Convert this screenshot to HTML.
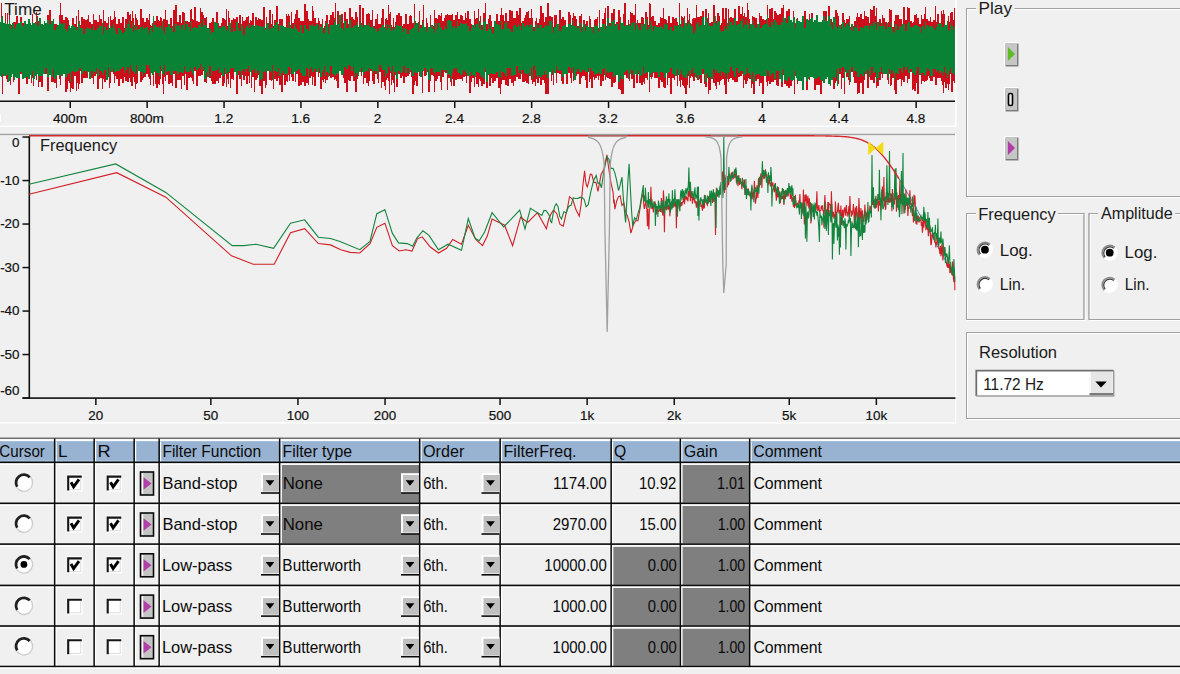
<!DOCTYPE html>
<html><head><meta charset="utf-8"><style>
html,body{margin:0;padding:0;width:1180px;height:674px;overflow:hidden;background:#f0f0f0;}
svg{display:block;font-family:"Liberation Sans", sans-serif;}
</style></head><body>
<svg width="1180" height="674" viewBox="0 0 1180 674">
<rect x="0" y="0" width="1180" height="674" fill="#f0f0f0"/>
<path d="M0 22.1H1V75.6H0ZM1 2.5H2V77.1H1ZM2 15.6H3V93.5H2ZM3 23.4H5V75.7H3ZM5 12.9H6V75.5H5ZM6 24.4H7V79.2H6ZM7 12.7H8V82.0H7ZM8 24.1H9V82.0H8ZM9 13.7H10V80.8H9ZM10 23.8H11V85.0H10ZM11 24.5H12V76.7H11ZM12 23.0H13V74.3H12ZM13 22.2H14V81.6H13ZM14 22.4H15V79.7H14ZM15 21.7H16V76.5H15ZM16 16.0H18V77.5H16ZM18 23.4H20V93.5H18ZM20 17.2H22V74.2H20ZM22 22.9H24V78.7H22ZM24 20.7H26V77.5H24ZM26 23.9H28V83.9H26ZM28 18.8H30V78.9H28ZM30 23.2H31V74.7H30ZM31 24.6H32V83.0H31ZM32 13.6H33V77.6H32ZM33 23.4H34V86.0H33ZM34 23.1H35V79.3H34ZM35 22.3H36V76.2H35ZM36 12.3H37V79.6H36ZM37 15.6H38V74.3H37ZM38 21.4H39V87.3H38ZM39 18.2H41V82.3H39ZM41 23.9H43V86.8H41ZM43 25.0H44V74.3H43ZM44 20.7H45V74.1H44ZM45 22.8H47V74.0H45ZM47 15.3H49V90.6H47ZM49 10.4H51V74.7H49ZM51 21.0H53V82.1H51ZM53 19.4H54V82.0H53ZM54 24.0H56V83.2H54ZM56 24.1H57V87.9H56ZM57 24.9H59V74.8H57ZM59 15.3H60V79.2H59ZM60 2.7H61V84.7H60ZM61 15.2H63V76.4H61ZM63 20.0H65V74.0H63ZM65 16.5H67V92.2H65ZM67 17.9H68V88.7H67ZM68 20.0H69V81.0H68ZM69 24.8H70V82.6H69ZM70 27.6H71V92.1H70ZM71 25.5H72V88.2H71ZM72 17.6H74V89.1H72ZM74 23.5H76V76.1H74ZM76 16.4H77V90.5H76ZM77 26.6H78V82.6H77ZM78 10.3H79V88.8H78ZM79 21.0H80V83.5H79ZM80 25.1H81V70.8H80ZM81 16.6H83V82.6H81ZM83 19.0H85V77.6H83ZM85 20.3H87V78.0H85ZM87 18.5H88V77.8H87ZM88 15.3H89V71.7H88ZM89 22.0H91V79.2H89ZM91 24.0H93V78.4H91ZM93 14.0H94V84.3H93ZM94 20.2H96V75.7H94ZM96 20.2H97V73.7H96ZM97 21.7H99V89.3H97ZM99 14.5H100V79.1H99ZM100 19.0H102V78.2H100ZM102 23.3H103V88.6H102ZM103 10.1H104V78.6H103ZM104 20.8H106V82.3H104ZM106 22.8H108V80.3H106ZM108 16.8H109V77.1H108ZM109 28.3H110V87.7H109ZM110 16.3H111V82.8H110ZM111 19.6H113V72.3H111ZM113 18.9H114V74.4H113ZM114 11.3H115V83.3H114ZM115 16.5H116V76.2H115ZM116 23.7H118V79.3H116ZM118 18.9H120V85.7H118ZM120 22.9H122V79.3H120ZM122 17.3H124V82.6H122ZM124 28.1H125V76.7H124ZM125 18.7H127V81.2H125ZM127 12.0H129V81.7H127ZM129 14.8H130V77.8H129ZM130 13.5H131V81.7H130ZM131 21.1H132V86.3H131ZM132 11.4H133V85.8H132ZM133 18.3H134V76.5H133ZM134 24.5H135V82.3H134ZM135 14.1H136V88.5H135ZM136 18.4H137V83.9H136ZM137 19.7H138V83.0H137ZM138 24.5H140V71.3H138ZM140 9.3H142V81.7H140ZM142 17.5H143V79.9H142ZM143 17.8H144V77.7H143ZM144 21.8H146V77.4H144ZM146 17.8H148V73.9H146ZM148 20.3H149V77.0H148ZM149 13.5H150V79.0H149ZM150 24.5H151V85.1H150ZM151 25.9H152V72.8H151ZM152 22.7H153V74.5H152ZM153 16.0H154V86.1H153ZM154 21.3H155V71.9H154ZM155 20.8H156V84.1H155ZM156 15.9H158V88.3H156ZM158 20.3H159V83.8H158ZM159 20.9H160V85.2H159ZM160 16.7H161V78.7H160ZM161 17.6H162V71.3H161ZM162 21.2H163V84.1H162ZM163 19.3H164V93.5H163ZM164 18.8H165V76.9H164ZM165 10.4H166V80.7H165ZM166 19.9H168V75.3H166ZM168 24.2H170V83.8H168ZM170 18.4H172V83.3H170ZM172 26.1H173V85.9H172ZM173 9.5H175V74.3H173ZM175 5.0H177V87.9H175ZM177 21.5H179V80.1H177ZM179 14.6H181V79.9H179ZM181 23.0H182V88.8H181ZM182 11.9H184V76.3H182ZM184 12.8H185V84.9H184ZM185 20.6H186V73.6H185ZM186 20.6H188V90.0H186ZM188 22.0H190V77.9H188ZM190 10.3H191V76.7H190ZM191 8.5H192V78.2H191ZM192 19.2H193V81.1H192ZM193 20.3H194V84.1H193ZM194 7.3H196V71.1H194ZM196 20.5H198V85.9H196ZM198 21.9H200V76.1H198ZM200 7.8H201V76.2H200ZM201 11.9H203V74.8H201ZM203 15.3H204V70.8H203ZM204 17.7H206V82.2H204ZM206 17.2H207V82.7H206ZM207 28.2H209V76.7H207ZM209 22.5H211V77.8H209ZM211 21.8H212V80.5H211ZM212 17.5H214V83.9H212ZM214 21.9H216V84.1H214ZM216 11.5H218V81.1H216ZM218 22.8H219V83.0H218ZM219 25.9H221V78.3H219ZM221 23.2H222V75.3H221ZM222 18.2H224V86.0H222ZM224 18.5H225V82.5H224ZM225 19.9H226V74.1H225ZM226 9.2H227V87.4H226ZM227 25.5H228V78.9H227ZM228 11.3H229V83.8H228ZM229 18.1H230V73.2H229ZM230 22.6H231V88.2H230ZM231 19.5H233V79.4H231ZM233 17.5H234V79.5H233ZM234 18.6H236V71.7H234ZM236 16.7H238V93.5H236ZM238 23.0H239V74.6H238ZM239 15.2H241V79.4H239ZM241 24.1H242V86.0H241ZM242 17.3H243V74.6H242ZM243 21.0H245V79.6H243ZM245 20.3H246V75.5H245ZM246 17.1H248V83.7H246ZM248 16.2H249V75.8H248ZM249 23.4H250V83.4H249ZM250 20.0H251V71.5H250ZM251 21.2H252V88.3H251ZM252 13.1H254V77.1H252ZM254 25.5H255V92.0H254ZM255 17.4H257V79.9H255ZM257 19.9H258V77.7H257ZM258 18.1H259V75.3H258ZM259 18.5H261V85.6H259ZM261 20.3H263V93.5H261ZM263 7.3H265V80.8H263ZM265 28.0H266V88.0H265ZM266 16.7H267V84.6H266ZM267 23.2H269V71.1H267ZM269 10.3H271V80.1H269ZM271 24.4H272V80.8H271ZM272 14.2H273V79.5H272ZM273 26.2H274V88.9H273ZM274 20.3H276V79.3H274ZM276 6.0H278V81.1H276ZM278 23.6H279V77.9H278ZM279 18.6H281V84.5H279ZM281 18.7H283V92.0H281ZM283 25.9H284V74.5H283ZM284 27.2H286V84.9H284ZM286 14.0H287V81.3H286ZM287 15.5H288V82.3H287ZM288 14.4H289V75.1H288ZM289 16.1H290V80.6H289ZM290 24.9H291V74.0H290ZM291 12.4H292V77.1H291ZM292 23.3H294V80.7H292ZM294 18.9H295V72.0H294ZM295 14.1H296V81.8H295ZM296 9.6H298V73.7H296ZM298 17.6H300V85.7H298ZM300 20.6H302V85.1H300ZM302 21.3H304V82.4H302ZM304 3.8H306V86.0H304ZM306 10.6H308V83.0H306ZM308 19.1H309V85.1H308ZM309 21.4H311V77.5H309ZM311 20.5H312V76.4H311ZM312 6.2H313V85.4H312ZM313 10.6H314V76.6H313ZM314 18.4H316V86.2H314ZM316 23.3H318V72.2H316ZM318 18.3H319V77.3H318ZM319 21.0H320V73.3H319ZM320 23.6H322V88.6H320ZM322 18.7H323V79.9H322ZM323 27.5H324V81.7H323ZM324 25.9H325V78.9H324ZM325 20.8H326V83.3H325ZM326 15.0H328V80.0H326ZM328 23.6H329V76.5H328ZM329 20.1H330V75.7H329ZM330 15.0H332V77.5H330ZM332 12.2H334V77.4H332ZM334 18.0H335V79.5H334ZM335 2.5H336V78.8H335ZM336 25.1H337V80.5H336ZM337 11.1H339V87.8H337ZM339 15.3H341V71.4H339ZM341 14.2H343V74.8H341ZM343 23.1H344V78.3H343ZM344 12.0H346V83.0H344ZM346 19.1H348V92.0H346ZM348 24.0H349V79.5H348ZM349 8.2H351V81.0H349ZM351 16.9H353V76.4H351ZM353 19.3H354V80.8H353ZM354 20.1H355V80.6H354ZM355 12.1H357V92.1H355ZM357 17.4H358V79.4H357ZM358 27.0H359V75.5H358ZM359 5.1H361V72.4H359ZM361 22.7H362V76.1H361ZM362 8.4H363V71.9H362ZM363 7.7H364V84.4H363ZM364 25.1H366V77.6H364ZM366 14.4H368V82.8H366ZM368 12.5H369V86.0H368ZM369 14.4H370V80.6H369ZM370 20.4H372V71.4H370ZM372 9.7H373V80.8H372ZM373 26.2H375V83.9H373ZM375 19.3H377V74.3H375ZM377 14.4H378V79.0H377ZM378 23.5H379V83.4H378ZM379 23.8H381V71.8H379ZM381 17.6H382V87.7H381ZM382 9.3H384V81.6H382ZM384 27.4H385V85.7H384ZM385 19.4H386V89.5H385ZM386 17.5H387V79.5H386ZM387 20.2H388V78.0H387ZM388 4.6H389V80.6H388ZM389 13.7H390V93.5H389ZM390 11.9H391V72.7H390ZM391 25.4H392V85.0H391ZM392 26.8H393V80.3H392ZM393 18.1H394V83.3H393ZM394 26.5H395V92.2H394ZM395 22.1H396V75.1H395ZM396 14.7H398V86.6H396ZM398 12.5H400V73.5H398ZM400 16.4H402V78.3H400ZM402 25.9H403V76.4H402ZM403 24.2H405V82.8H403ZM405 14.2H407V76.8H405ZM407 23.8H409V76.0H407ZM409 15.9H410V74.1H409ZM410 14.9H411V71.9H410ZM411 15.7H412V77.0H411ZM412 23.1H414V93.5H412ZM414 3.7H415V85.4H414ZM415 21.4H416V81.3H415ZM416 23.1H418V85.5H416ZM418 21.7H419V72.4H418ZM419 10.6H420V75.5H419ZM420 24.5H422V77.4H420ZM422 19.8H423V92.5H422ZM423 4.7H424V71.4H423ZM424 27.2H426V76.4H424ZM426 18.0H427V74.7H426ZM427 22.8H428V71.9H427ZM428 27.3H430V92.4H428ZM430 14.6H431V81.2H430ZM431 25.0H433V74.5H431ZM433 26.1H434V76.0H433ZM434 9.5H435V91.7H434ZM435 18.3H437V80.5H435ZM437 18.6H438V78.9H437ZM438 14.7H440V76.2H438ZM440 15.6H441V81.5H440ZM441 13.3H442V90.1H441ZM442 20.5H444V77.0H442ZM444 18.3H445V71.5H444ZM445 14.9H447V73.1H445ZM447 14.4H448V90.1H447ZM448 15.1H450V77.9H448ZM450 14.8H451V82.0H450ZM451 14.7H452V85.7H451ZM452 13.6H453V79.0H452ZM453 19.8H455V85.6H453ZM455 15.3H457V80.2H455ZM457 11.8H458V79.1H457ZM458 19.4H460V79.3H458ZM460 14.5H462V78.8H460ZM462 15.7H463V80.9H462ZM463 19.5H465V77.2H463ZM465 13.2H466V76.2H465ZM466 17.7H467V83.2H466ZM467 11.2H469V75.5H467ZM469 19.0H471V93.1H469ZM471 24.3H472V81.6H471ZM472 25.4H474V77.9H472ZM474 11.1H475V87.1H474ZM475 18.7H476V76.7H475ZM476 17.6H478V83.9H476ZM478 8.7H479V86.9H478ZM479 20.7H480V78.5H479ZM480 16.2H481V81.3H480ZM481 25.0H483V86.0H481ZM483 12.6H485V84.3H483ZM485 2.5H486V72.2H485ZM486 23.6H488V87.5H486ZM488 18.7H489V74.8H488ZM489 14.5H491V85.5H489ZM491 20.9H492V77.9H491ZM492 26.5H494V83.3H492ZM494 21.2H496V80.8H494ZM496 14.2H498V77.5H496ZM498 20.6H500V87.5H498ZM500 14.9H501V93.5H500ZM501 8.1H502V84.3H501ZM502 15.3H504V80.3H502ZM504 20.9H505V80.2H504ZM505 12.8H507V84.5H505ZM507 20.8H509V85.8H507ZM509 9.7H511V79.3H509ZM511 11.4H513V82.7H511ZM513 17.6H514V85.5H513ZM514 17.5H516V81.0H514ZM516 11.0H518V76.6H516ZM518 14.5H519V78.9H518ZM519 7.9H521V78.9H519ZM521 23.1H522V73.8H521ZM522 20.8H524V82.2H522ZM524 17.6H525V81.7H524ZM525 14.9H526V81.2H525ZM526 12.4H528V83.1H526ZM528 10.5H529V83.8H528ZM529 17.6H531V76.2H529ZM531 9.1H532V80.0H531ZM532 18.4H533V83.5H532ZM533 26.7H535V81.6H533ZM535 21.0H536V86.1H535ZM536 18.0H537V79.1H536ZM537 23.0H539V82.8H537ZM539 19.2H540V77.8H539ZM540 6.0H542V85.4H540ZM542 13.1H544V80.0H542ZM544 22.1H545V82.6H544ZM545 16.5H546V93.5H545ZM546 17.1H547V93.5H546ZM547 3.0H549V93.5H547ZM549 16.2H551V71.5H549ZM551 16.8H552V80.8H551ZM552 16.6H553V75.1H552ZM553 27.3H554V84.9H553ZM554 15.2H556V72.5H554ZM556 14.7H557V83.4H556ZM557 23.6H559V72.6H557ZM559 9.8H561V73.9H559ZM561 18.5H562V80.8H561ZM562 16.6H564V83.9H562ZM564 19.7H566V73.9H564ZM566 27.3H568V84.1H566ZM568 12.2H570V72.9H568ZM570 14.8H571V77.5H570ZM571 25.3H572V83.2H571ZM572 17.6H573V73.0H572ZM573 13.4H574V80.7H573ZM574 15.7H576V80.2H574ZM576 19.2H577V75.5H576ZM577 26.0H579V73.7H577ZM579 16.1H581V83.8H579ZM581 13.8H582V77.9H581ZM582 27.1H583V75.6H582ZM583 20.3H585V75.9H583ZM585 24.3H586V79.6H585ZM586 20.9H588V87.6H586ZM588 27.2H589V71.5H588ZM589 15.8H590V82.3H589ZM590 18.5H591V79.0H590ZM591 27.2H593V88.2H591ZM593 26.5H594V77.4H593ZM594 19.5H595V79.7H594ZM595 18.7H597V78.4H595ZM597 17.3H598V76.3H597ZM598 27.5H599V80.3H598ZM599 9.7H600V76.0H599ZM600 27.1H602V85.7H600ZM602 18.6H604V80.8H602ZM604 12.7H605V75.2H604ZM605 7.5H606V80.1H605ZM606 25.7H607V77.1H606ZM607 5.8H609V77.7H607ZM609 22.5H611V78.5H609ZM611 13.4H613V87.4H611ZM613 9.4H615V82.6H613ZM615 24.4H616V81.6H615ZM616 22.4H618V74.5H616ZM618 10.3H620V89.2H618ZM620 16.8H621V90.0H620ZM621 23.4H623V93.5H621ZM623 13.8H624V93.5H623ZM624 2.5H626V74.8H624ZM626 25.3H628V78.4H626ZM628 20.0H629V78.6H628ZM629 23.5H630V81.0H629ZM630 11.8H631V74.4H630ZM631 12.5H633V78.5H631ZM633 14.7H635V88.4H633ZM635 3.8H636V74.1H635ZM636 23.4H637V82.9H636ZM637 19.5H638V82.8H637ZM638 22.9H639V73.5H638ZM639 22.7H641V83.4H639ZM641 16.7H643V85.4H641ZM643 17.6H644V81.8H643ZM644 24.2H645V83.5H644ZM645 12.2H647V78.4H645ZM647 17.1H648V80.1H647ZM648 24.5H649V71.8H648ZM649 2.8H650V91.9H649ZM650 4.0H651V77.0H650ZM651 17.4H652V79.2H651ZM652 15.9H653V76.8H652ZM653 16.2H654V73.0H653ZM654 20.5H656V78.0H654ZM656 25.3H658V77.9H656ZM658 23.2H660V87.6H658ZM660 17.1H661V79.5H660ZM661 17.9H663V82.2H661ZM663 8.4H664V87.3H663ZM664 19.1H666V88.3H664ZM666 20.4H667V73.3H666ZM667 23.0H668V85.4H667ZM668 16.3H670V77.6H668ZM670 23.4H672V93.5H670ZM672 17.0H674V78.2H672ZM674 19.4H675V79.6H674ZM675 17.5H677V75.5H675ZM677 22.4H678V86.3H677ZM678 25.1H679V75.4H678ZM679 2.5H680V81.3H679ZM680 24.1H681V86.5H680ZM681 16.1H682V80.4H681ZM682 16.7H683V84.7H682ZM683 17.9H684V85.6H683ZM684 15.9H685V87.9H684ZM685 23.0H687V93.5H685ZM687 7.6H688V84.5H687ZM688 19.7H689V76.3H688ZM689 13.7H690V87.7H689ZM690 22.6H691V78.0H690ZM691 24.0H692V76.1H691ZM692 18.7H693V76.9H692ZM693 17.5H695V80.9H693ZM695 18.0H696V76.8H695ZM696 5.1H697V77.9H696ZM697 17.1H699V79.9H697ZM699 16.8H700V78.9H699ZM700 15.5H702V83.3H700ZM702 11.2H704V73.6H702ZM704 25.1H705V84.2H704ZM705 9.4H707V86.9H705ZM707 17.5H708V77.5H707ZM708 13.4H709V93.5H708ZM709 22.7H711V89.8H709ZM711 21.7H713V78.7H711ZM713 5.2H715V83.0H713ZM715 16.0H716V85.8H715ZM716 20.8H717V89.1H716ZM717 12.5H719V81.8H717ZM719 16.4H720V84.7H719ZM720 24.6H721V80.6H720ZM721 22.6H722V80.1H721ZM722 7.5H724V79.2H722ZM724 19.0H725V84.5H724ZM725 7.6H727V93.5H725ZM727 22.7H728V79.0H727ZM728 9.0H729V81.5H728ZM729 18.0H730V78.7H729ZM730 17.3H732V78.2H730ZM732 17.9H734V79.7H732ZM734 8.5H736V82.1H734ZM736 20.5H738V81.8H736ZM738 5.6H740V77.0H738ZM740 14.4H742V76.2H740ZM742 6.8H743V74.2H742ZM743 15.6H744V88.1H743ZM744 13.1H745V79.9H744ZM745 17.3H747V83.6H745ZM747 2.5H748V81.1H747ZM748 10.2H749V77.8H748ZM749 18.5H750V78.6H749ZM750 23.9H751V79.2H750ZM751 24.4H752V87.7H751ZM752 15.7H753V83.5H752ZM753 16.6H755V93.5H753ZM755 18.3H757V80.7H755ZM757 23.5H759V78.6H757ZM759 12.9H760V85.7H759ZM760 15.8H762V82.5H760ZM762 19.1H764V93.5H762ZM764 20.4H766V75.5H764ZM766 18.7H767V81.9H766ZM767 4.5H768V85.9H767ZM768 17.9H769V80.5H768ZM769 8.5H771V83.5H769ZM771 7.6H773V81.5H771ZM773 19.1H774V81.7H773ZM774 10.9H776V80.1H774ZM776 12.8H777V85.4H776ZM777 15.3H779V85.7H777ZM779 13.5H781V79.2H779ZM781 7.8H783V87.4H781ZM783 5.1H784V74.8H783ZM784 18.3H786V83.8H784ZM786 10.5H788V86.2H786ZM788 8.6H790V88.4H788ZM790 20.2H792V86.0H790ZM792 21.5H793V80.9H792ZM793 11.1H794V79.9H793ZM794 16.6H795V93.5H794ZM795 23.0H796V76.4H795ZM796 19.3H797V77.8H796ZM797 17.9H798V84.1H797ZM798 21.2H800V80.8H798ZM800 22.2H802V80.6H800ZM802 16.2H804V90.2H802ZM804 10.7H806V76.9H804ZM806 19.4H808V89.5H806ZM808 19.6H809V78.7H808ZM809 13.7H810V80.0H809ZM810 19.3H811V77.0H810ZM811 12.6H813V76.7H811ZM813 22.3H814V78.2H813ZM814 19.7H816V90.3H814ZM816 14.6H818V84.9H816ZM818 21.8H820V85.0H818ZM820 22.1H822V93.5H820ZM822 20.4H823V81.0H822ZM823 10.8H825V82.7H823ZM825 11.1H827V78.9H825ZM827 21.0H828V77.2H827ZM828 5.7H830V83.9H828ZM830 18.6H831V85.5H830ZM831 18.9H832V80.1H831ZM832 22.1H833V80.3H832ZM833 16.8H835V89.2H833ZM835 10.0H836V83.3H835ZM836 10.4H837V80.7H836ZM837 13.1H838V85.8H837ZM838 16.3H839V83.6H838ZM839 25.0H841V74.4H839ZM841 24.0H842V88.5H841ZM842 12.9H844V78.1H842ZM844 20.0H845V93.5H844ZM845 22.5H846V72.4H845ZM846 18.8H848V77.0H846ZM848 18.7H849V79.5H848ZM849 16.0H850V84.9H849ZM850 27.3H851V82.3H850ZM851 23.9H853V72.0H851ZM853 26.4H854V77.1H853ZM854 21.0H856V82.8H854ZM856 16.9H857V82.8H856ZM857 12.6H858V93.5H857ZM858 16.8H860V93.1H858ZM860 14.1H862V82.7H860ZM862 19.2H864V93.5H862ZM864 10.6H865V79.6H864ZM865 15.5H867V74.1H865ZM867 17.3H869V88.3H867ZM869 23.3H870V77.4H869ZM870 9.0H871V79.8H870ZM871 10.4H873V80.3H871ZM873 5.6H875V82.9H873ZM875 16.0H876V76.6H875ZM876 7.7H877V88.3H876ZM877 21.5H879V86.2H877ZM879 18.8H881V80.3H879ZM881 22.5H882V73.7H881ZM882 14.5H883V77.5H882ZM883 18.2H885V73.5H883ZM885 22.2H887V73.6H885ZM887 23.0H888V79.5H887ZM888 21.9H889V84.1H888ZM889 8.8H890V74.0H889ZM890 10.3H891V86.1H890ZM891 10.2H892V84.6H891ZM892 26.6H893V77.8H892ZM893 26.8H894V77.8H893ZM894 20.8H895V89.8H894ZM895 15.0H897V93.5H895ZM897 15.0H899V79.5H897ZM899 19.4H901V79.2H899ZM901 18.7H902V85.9H901ZM902 23.6H903V79.5H902ZM903 6.9H905V82.2H903ZM905 19.9H907V75.9H905ZM907 7.0H908V82.7H907ZM908 8.2H910V78.9H908ZM910 20.7H912V71.6H910ZM912 23.0H913V90.0H912ZM913 22.2H914V88.6H913ZM914 14.8H916V91.2H914ZM916 13.7H917V83.1H916ZM917 17.7H919V93.5H917ZM919 23.5H921V75.3H919ZM921 14.6H922V84.3H921ZM922 19.1H924V80.7H922ZM924 14.0H925V81.6H924ZM925 7.0H926V81.1H925ZM926 19.3H927V81.4H926ZM927 19.0H928V80.1H927ZM928 21.0H929V75.9H928ZM929 20.7H930V77.6H929ZM930 17.3H931V80.5H930ZM931 22.3H933V81.0H931ZM933 19.5H935V77.1H933ZM935 5.8H936V84.7H935ZM936 22.4H937V85.4H936ZM937 13.8H939V78.4H937ZM939 23.0H941V77.9H939ZM941 10.8H942V80.5H941ZM942 13.5H943V85.0H942ZM943 10.4H944V93.0H943ZM944 14.0H945V82.1H944ZM945 25.3H947V88.3H945ZM947 20.8H948V84.4H947ZM948 16.3H949V90.0H948ZM949 21.5H950V83.7H949ZM950 12.5H951V73.6H950ZM951 12.1H953V92.3H951ZM953 19.8H954V80.9H953ZM954 8.0H955V82.5H954Z" fill="#cd0f1b" shape-rendering="crispEdges"/>
<path d="M0 22.1H1V75.6H0ZM1 15.3H2V77.1H1ZM2 15.6H3V78.5H2ZM3 23.4H5V75.7H3ZM5 21.2H6V75.5H5ZM6 24.4H7V79.2H6ZM7 20.7H8V75.4H7ZM8 24.1H9V82.0H8ZM9 19.7H10V80.8H9ZM10 23.8H11V79.3H10ZM11 24.5H12V76.7H11ZM12 23.0H13V74.3H12ZM13 22.2H14V77.4H13ZM14 22.4H15V79.7H14ZM15 21.7H16V76.5H15ZM16 23.8H18V77.5H16ZM18 23.4H20V77.5H18ZM20 17.2H22V74.2H20ZM22 22.9H24V78.7H22ZM24 20.7H26V77.5H24ZM26 23.9H28V76.9H26ZM28 18.8H30V78.9H28ZM30 23.2H31V74.7H30ZM31 24.6H32V77.3H31ZM32 22.3H33V77.6H32ZM33 23.4H34V80.5H33ZM34 23.1H35V79.3H34ZM35 22.3H36V76.2H35ZM36 16.9H37V74.9H36ZM37 24.7H38V74.3H37ZM38 21.4H39V81.0H38ZM39 18.2H41V75.5H39ZM41 23.9H43V75.5H41ZM43 25.0H44V74.3H43ZM44 20.7H45V74.1H44ZM45 22.8H47V74.0H45ZM47 20.4H49V76.5H47ZM49 23.9H51V74.7H49ZM51 21.0H53V76.9H51ZM53 19.4H54V74.1H53ZM54 24.0H56V78.8H54ZM56 24.1H57V76.3H56ZM57 24.9H59V74.8H57ZM59 20.8H60V75.9H59ZM60 23.2H61V74.6H60ZM61 20.1H63V76.4H61ZM63 23.2H65V74.0H63ZM65 24.7H67V78.9H65ZM67 26.9H68V78.0H67ZM68 23.9H69V73.8H68ZM69 24.8H70V72.7H69ZM70 27.6H71V81.9H70ZM71 25.5H72V72.4H71ZM72 23.1H74V75.5H72ZM74 26.7H76V72.4H74ZM76 27.5H77V71.9H76ZM77 26.6H78V74.2H77ZM78 23.8H79V70.6H78ZM79 21.0H80V72.2H79ZM80 28.2H81V70.8H80ZM81 28.3H83V74.2H81ZM83 28.0H85V70.7H83ZM85 27.5H87V70.9H85ZM87 27.4H88V74.7H87ZM88 26.0H89V71.7H88ZM89 28.2H91V79.2H89ZM91 24.0H93V70.8H91ZM93 25.6H94V75.4H93ZM94 26.9H96V71.7H94ZM96 25.0H97V73.7H96ZM97 28.4H99V75.6H97ZM99 25.2H100V74.8H99ZM100 26.1H102V72.6H100ZM102 23.3H103V77.0H102ZM103 27.1H104V74.8H103ZM104 26.4H106V75.8H104ZM106 22.8H108V80.3H106ZM108 24.6H109V71.1H108ZM109 28.3H110V81.0H109ZM110 25.1H111V71.3H110ZM111 23.9H113V72.3H111ZM113 24.0H114V71.1H113ZM114 26.9H115V76.2H114ZM115 26.4H116V76.2H115ZM116 28.4H118V73.3H116ZM118 27.8H120V70.9H118ZM120 27.9H122V71.3H120ZM122 27.4H124V72.1H122ZM124 28.1H125V72.8H124ZM125 27.8H127V71.0H125ZM127 23.8H129V73.2H127ZM129 20.3H130V74.1H129ZM130 27.8H131V71.0H130ZM131 27.4H132V73.2H131ZM132 22.9H133V71.8H132ZM133 27.4H134V70.6H133ZM134 24.5H135V74.5H134ZM135 25.9H136V72.1H135ZM136 26.0H137V71.9H136ZM137 24.0H138V76.9H137ZM138 27.6H140V71.3H138ZM140 26.7H142V76.0H140ZM142 26.7H143V76.0H142ZM143 21.2H144V72.3H143ZM144 21.8H146V72.8H144ZM146 26.9H148V70.5H146ZM148 25.3H149V71.2H148ZM149 27.8H150V70.6H149ZM150 28.1H151V75.5H150ZM151 25.9H152V72.8H151ZM152 26.7H153V74.5H152ZM153 16.0H154V73.6H153ZM154 24.8H155V71.9H154ZM155 25.0H156V71.0H155ZM156 27.2H158V73.3H156ZM158 25.6H159V72.7H158ZM159 27.7H160V76.0H159ZM160 24.9H161V70.6H160ZM161 27.7H162V71.3H161ZM162 21.2H163V78.5H162ZM163 25.4H164V73.6H163ZM164 27.9H165V71.9H164ZM165 25.2H166V75.2H165ZM166 26.6H168V71.8H166ZM168 24.2H170V72.9H168ZM170 28.1H172V74.8H170ZM172 26.1H173V75.3H172ZM173 26.9H175V71.3H173ZM175 23.5H177V70.8H175ZM177 26.3H179V73.8H177ZM179 25.0H181V71.6H179ZM181 28.5H182V73.0H181ZM182 23.7H184V72.7H182ZM184 19.7H185V71.1H184ZM185 28.1H186V73.6H185ZM186 23.6H188V75.8H186ZM188 26.6H190V71.8H188ZM190 24.0H191V73.6H190ZM191 21.0H192V70.9H191ZM192 27.7H193V76.7H192ZM193 25.9H194V74.7H193ZM194 27.3H196V71.1H194ZM196 26.0H198V72.4H196ZM198 21.9H200V73.0H198ZM200 19.8H201V70.6H200ZM201 26.8H203V70.6H201ZM203 18.8H204V70.8H203ZM204 25.4H206V79.0H204ZM206 26.0H207V76.4H206ZM207 28.2H209V76.7H207ZM209 28.0H211V71.7H209ZM211 28.2H212V75.8H211ZM212 25.0H214V70.8H212ZM214 21.9H216V70.9H214ZM216 23.3H218V71.7H216ZM218 26.9H219V73.1H218ZM219 25.9H221V73.1H219ZM221 27.2H222V72.2H221ZM222 26.2H224V75.7H222ZM224 27.3H225V71.2H224ZM225 26.1H226V74.1H225ZM226 24.6H227V73.7H226ZM227 25.5H228V73.5H227ZM228 21.8H229V71.8H228ZM229 21.7H230V73.2H229ZM230 22.6H231V71.7H230ZM231 25.8H233V71.4H231ZM233 27.1H234V73.7H233ZM234 27.6H236V71.7H234ZM236 21.0H238V79.3H236ZM238 27.5H239V70.6H238ZM239 26.6H241V71.1H239ZM241 24.1H242V80.0H241ZM242 24.6H243V70.9H242ZM243 27.9H245V75.5H243ZM245 28.4H246V75.5H245ZM246 25.7H248V75.8H246ZM248 24.4H249V71.2H248ZM249 27.5H250V72.2H249ZM250 25.4H251V71.5H250ZM251 26.5H252V75.9H251ZM252 22.5H254V70.6H252ZM254 25.5H255V75.2H254ZM255 24.6H257V72.9H255ZM257 24.2H258V73.5H257ZM258 26.1H259V70.9H258ZM259 26.4H261V81.6H259ZM261 26.5H263V79.0H261ZM263 26.3H265V72.4H263ZM265 28.0H266V73.6H265ZM266 24.4H267V72.9H266ZM267 23.2H269V71.1H267ZM269 24.9H271V71.6H269ZM271 24.4H272V73.1H271ZM272 25.3H273V72.1H272ZM273 26.2H274V80.3H273ZM274 24.5H276V72.4H274ZM276 22.4H278V72.2H276ZM278 28.1H279V71.0H278ZM279 24.8H281V75.5H279ZM281 26.0H283V75.9H281ZM283 25.9H284V70.6H283ZM284 27.2H286V73.9H284ZM286 22.2H287V77.2H286ZM287 27.7H288V74.6H287ZM288 21.7H289V71.3H288ZM289 25.0H290V71.4H289ZM290 24.9H291V74.0H290ZM291 27.7H292V72.4H291ZM292 27.3H294V74.3H292ZM294 24.1H295V72.0H294ZM295 27.3H296V73.5H295ZM296 25.5H298V73.7H296ZM298 27.0H300V73.8H298ZM300 20.6H302V73.4H300ZM302 28.1H304V75.6H302ZM304 23.8H306V76.0H304ZM306 28.0H308V74.7H306ZM308 27.0H309V77.1H308ZM309 25.2H311V73.4H309ZM311 25.7H312V72.7H311ZM312 23.7H313V72.0H312ZM313 23.2H314V71.5H313ZM314 25.9H316V72.0H314ZM316 23.3H318V72.2H316ZM318 27.6H319V72.6H318ZM319 24.6H320V73.3H319ZM320 27.3H322V76.8H320ZM322 24.1H323V72.2H322ZM323 27.5H324V73.2H323ZM324 25.9H325V73.0H324ZM325 27.0H326V75.7H325ZM326 23.0H328V72.2H326ZM328 27.8H329V76.5H328ZM329 27.3H330V72.6H329ZM330 25.1H332V70.9H330ZM332 24.8H334V74.2H332ZM334 21.7H335V76.0H334ZM335 18.6H336V74.6H335ZM336 25.1H337V73.1H336ZM337 23.8H339V74.3H337ZM339 15.3H341V71.4H339ZM341 28.2H343V74.8H341ZM343 26.7H344V73.9H343ZM344 20.9H346V71.1H344ZM346 28.1H348V74.8H346ZM348 28.0H349V70.8H348ZM349 20.4H351V72.6H349ZM351 28.1H353V71.1H351ZM353 24.9H354V72.9H353ZM354 26.1H355V76.9H354ZM355 25.0H357V76.1H355ZM357 21.9H358V75.1H357ZM358 27.0H359V75.5H358ZM359 24.9H361V72.4H359ZM361 22.7H362V71.9H361ZM362 24.5H363V71.9H362ZM363 26.6H364V74.8H363ZM364 25.1H366V71.6H364ZM366 23.1H368V70.9H366ZM368 23.3H369V74.0H368ZM369 24.6H370V73.6H369ZM370 26.9H372V71.4H370ZM372 26.2H373V72.7H372ZM373 26.2H375V73.1H373ZM375 25.7H377V74.3H375ZM377 26.6H378V74.4H377ZM378 28.0H379V73.3H378ZM379 27.6H381V71.8H379ZM381 27.4H382V72.4H381ZM382 20.8H384V76.4H382ZM384 27.4H385V71.8H384ZM385 28.1H386V80.1H385ZM386 22.1H387V74.3H386ZM387 26.2H388V73.4H387ZM388 25.3H389V71.8H388ZM389 27.7H390V72.3H389ZM390 24.5H391V72.7H390ZM391 25.4H392V72.0H391ZM392 26.8H393V72.7H392ZM393 26.8H394V75.9H393ZM394 26.5H395V72.4H394ZM395 26.7H396V72.0H395ZM396 25.2H398V78.6H396ZM398 26.3H400V73.5H398ZM400 26.3H402V73.0H400ZM402 25.9H403V72.3H402ZM403 27.7H405V72.3H403ZM405 26.8H407V72.5H405ZM407 27.8H409V71.4H407ZM409 23.7H410V74.1H409ZM410 25.6H411V71.9H410ZM411 27.0H412V70.9H411ZM412 27.2H414V76.2H412ZM414 18.2H415V73.4H414ZM415 24.5H416V73.2H415ZM416 23.1H418V77.7H416ZM418 25.4H419V72.4H418ZM419 23.2H420V71.8H419ZM420 27.5H422V77.4H420ZM422 24.9H423V72.7H422ZM423 22.4H424V71.4H423ZM424 27.2H426V71.2H424ZM426 26.8H427V74.7H426ZM427 27.7H428V71.9H427ZM428 27.3H430V79.9H428ZM430 24.2H431V71.5H430ZM431 25.0H433V74.5H431ZM433 26.1H434V73.0H433ZM434 26.6H435V74.4H434ZM435 23.2H437V71.6H435ZM437 27.2H438V71.6H437ZM438 23.1H440V71.5H438ZM440 27.3H441V76.9H440ZM441 20.5H442V74.7H441ZM442 26.2H444V72.5H442ZM444 25.6H445V71.5H444ZM445 25.5H447V73.1H445ZM447 20.5H448V75.0H447ZM448 18.8H450V73.9H448ZM450 20.6H451V75.7H450ZM451 20.9H452V80.5H451ZM452 22.8H453V73.0H452ZM453 25.8H455V72.6H453ZM455 25.9H457V72.9H455ZM457 21.4H458V72.7H457ZM458 23.6H460V73.3H458ZM460 22.5H462V74.5H460ZM462 23.6H463V73.7H462ZM463 23.0H465V74.0H463ZM465 24.0H466V76.2H465ZM466 22.5H467V76.0H466ZM467 24.0H469V75.5H467ZM469 25.6H471V77.6H469ZM471 24.3H472V74.6H471ZM472 25.4H474V74.8H472ZM474 24.1H475V75.6H474ZM475 23.3H476V76.7H475ZM476 21.4H478V74.6H476ZM478 19.4H479V77.3H478ZM479 24.2H480V73.3H479ZM480 22.6H481V74.9H480ZM481 25.0H483V76.6H481ZM483 19.0H485V79.2H483ZM485 18.3H486V72.2H485ZM486 26.6H488V81.9H486ZM488 23.0H489V74.8H488ZM489 24.4H491V74.1H489ZM491 26.2H492V72.7H491ZM492 26.5H494V73.9H492ZM494 21.2H496V74.0H494ZM496 24.3H498V72.4H496ZM498 25.2H500V77.3H498ZM500 25.9H501V74.6H500ZM501 21.3H502V77.8H501ZM502 25.6H504V74.1H502ZM504 24.1H505V75.0H504ZM505 21.5H507V75.5H505ZM507 27.1H509V72.3H507ZM509 25.0H511V73.4H509ZM511 26.2H513V75.9H511ZM513 25.7H514V79.2H513ZM514 25.4H516V75.0H514ZM516 26.7H518V72.5H516ZM518 21.9H519V73.4H518ZM519 25.6H521V73.8H519ZM521 27.3H522V73.8H521ZM522 20.8H524V75.6H522ZM524 26.5H525V73.8H524ZM525 25.5H526V74.3H525ZM526 23.6H528V76.4H526ZM528 25.5H529V72.5H528ZM529 25.3H531V76.2H529ZM531 24.3H532V72.5H531ZM532 24.7H533V78.6H532ZM533 26.7H535V72.3H533ZM535 25.4H536V76.2H535ZM536 23.8H537V75.4H536ZM537 23.0H539V77.2H537ZM539 24.6H540V74.7H539ZM540 24.4H542V77.4H540ZM542 21.0H544V74.7H542ZM544 22.1H545V73.5H544ZM545 26.5H546V74.9H545ZM546 24.8H547V74.2H546ZM547 22.0H549V77.9H547ZM549 21.4H551V71.5H549ZM551 20.7H552V76.3H551ZM552 27.2H553V71.7H552ZM553 27.3H554V74.7H553ZM554 27.1H556V72.5H554ZM556 23.6H557V72.5H556ZM557 23.6H559V72.6H557ZM559 26.6H561V73.9H559ZM561 24.2H562V75.0H561ZM562 25.8H564V77.4H562ZM564 24.7H566V73.9H564ZM566 27.3H568V73.5H566ZM568 20.2H570V72.9H568ZM570 23.4H571V73.1H570ZM571 25.3H572V74.7H571ZM572 25.8H573V73.0H572ZM573 17.0H574V71.7H573ZM574 25.7H576V80.2H574ZM576 26.3H577V71.9H576ZM577 26.0H579V73.7H577ZM579 22.8H581V72.2H579ZM581 25.5H582V72.0H581ZM582 27.1H583V72.2H582ZM583 24.2H585V71.9H583ZM585 24.3H586V72.3H585ZM586 25.2H588V72.0H586ZM588 27.2H589V71.5H588ZM589 25.0H590V73.7H589ZM590 26.7H591V72.5H590ZM591 27.2H593V76.0H591ZM593 26.5H594V72.3H593ZM594 19.5H595V75.1H594ZM595 26.2H597V73.7H595ZM597 24.5H598V72.6H597ZM598 27.5H599V74.4H598ZM599 22.0H600V76.0H599ZM600 27.1H602V73.8H600ZM602 24.2H604V73.6H602ZM604 23.6H605V75.2H604ZM605 25.3H606V80.1H605ZM606 25.7H607V73.2H606ZM607 18.3H609V72.9H607ZM609 25.5H611V74.5H609ZM611 22.2H613V75.2H611ZM613 19.5H615V76.6H613ZM615 24.4H616V81.6H615ZM616 22.4H618V74.5H616ZM618 23.2H620V82.2H618ZM620 19.8H621V76.3H620ZM621 23.4H623V78.6H621ZM623 22.1H624V78.5H623ZM624 20.1H626V74.8H624ZM626 25.3H628V74.7H626ZM628 25.7H629V78.6H628ZM629 23.5H630V75.8H629ZM630 25.6H631V74.4H630ZM631 20.3H633V74.5H631ZM633 21.9H635V74.7H633ZM635 24.0H636V74.1H635ZM636 23.4H637V75.7H636ZM637 25.4H638V74.2H637ZM638 26.6H639V73.5H638ZM639 26.0H641V76.0H639ZM641 24.0H643V74.9H641ZM643 26.1H644V72.7H643ZM644 24.2H645V74.4H644ZM645 18.9H647V72.8H645ZM647 26.8H648V73.0H647ZM648 24.5H649V71.8H648ZM649 22.6H650V80.1H649ZM650 25.1H651V73.0H650ZM651 21.1H652V75.1H651ZM652 25.7H653V76.8H652ZM653 27.3H654V73.0H653ZM654 23.9H656V71.8H654ZM656 25.3H658V74.7H656ZM658 26.7H660V79.0H658ZM660 25.8H661V73.5H660ZM661 26.6H663V73.0H661ZM663 25.3H664V73.1H663ZM664 24.2H666V78.1H664ZM666 25.1H667V73.3H666ZM667 23.0H668V74.8H667ZM668 23.8H670V72.0H668ZM670 26.7H672V72.9H670ZM672 24.7H674V74.3H672ZM674 25.0H675V74.8H674ZM675 25.7H677V75.5H675ZM677 25.9H678V72.1H677ZM678 25.1H679V75.4H678ZM679 17.2H680V74.7H679ZM680 24.1H681V74.4H680ZM681 19.6H682V72.1H681ZM682 26.4H683V77.1H682ZM683 24.4H684V74.8H683ZM684 18.9H685V77.0H684ZM685 23.0H687V77.5H685ZM687 26.2H688V73.7H687ZM688 23.5H689V72.8H688ZM689 21.4H690V75.6H689ZM690 25.9H691V74.0H690ZM691 24.0H692V72.8H691ZM692 25.7H693V73.4H692ZM693 26.7H695V72.7H693ZM695 25.5H696V76.8H695ZM696 21.1H697V74.5H696ZM697 21.7H699V79.9H697ZM699 26.7H700V74.5H699ZM700 24.6H702V77.4H700ZM702 17.3H704V73.6H702ZM704 25.1H705V74.8H704ZM705 17.2H707V83.2H705ZM707 21.7H708V73.4H707ZM708 23.1H709V77.7H708ZM709 26.0H711V77.4H709ZM711 26.2H713V78.7H711ZM713 22.3H715V74.0H713ZM715 16.0H716V76.3H715ZM716 25.1H717V76.8H716ZM717 21.2H719V72.5H717ZM719 22.1H720V72.7H719ZM720 24.6H721V74.7H720ZM721 26.4H722V75.5H721ZM722 24.1H724V75.3H722ZM724 24.0H725V75.3H724ZM725 26.3H727V75.2H725ZM727 22.7H728V79.0H727ZM728 23.1H729V73.2H728ZM729 18.0H730V74.2H729ZM730 21.6H732V73.4H730ZM732 25.0H734V76.2H732ZM734 17.0H736V77.2H734ZM736 25.3H738V74.3H736ZM738 23.8H740V77.0H738ZM740 20.6H742V76.2H740ZM742 18.4H743V74.2H742ZM743 22.6H744V77.4H743ZM744 24.1H745V75.6H744ZM745 22.1H747V73.9H745ZM747 17.8H748V74.2H747ZM748 22.9H749V73.1H748ZM749 23.1H750V73.4H749ZM750 23.9H751V74.6H750ZM751 24.4H752V79.7H751ZM752 21.2H753V73.1H752ZM753 24.5H755V81.8H753ZM755 21.7H757V75.0H755ZM757 23.5H759V74.4H757ZM759 18.4H760V74.3H759ZM760 25.5H762V75.8H760ZM762 25.2H764V76.6H762ZM764 24.1H766V75.5H764ZM766 24.4H767V75.7H766ZM767 14.8H768V75.9H767ZM768 24.6H769V75.9H768ZM769 23.8H771V75.6H769ZM771 22.2H773V74.1H771ZM773 23.4H774V77.1H773ZM774 20.3H776V80.1H774ZM776 22.0H777V77.6H776ZM777 24.5H779V77.4H777ZM779 19.5H781V79.2H779ZM781 21.1H783V81.8H781ZM783 17.2H784V74.8H783ZM784 18.3H786V80.4H784ZM786 21.6H788V80.8H786ZM788 16.1H790V80.4H788ZM790 20.2H792V79.6H790ZM792 21.5H793V80.9H792ZM793 17.0H794V79.9H793ZM794 16.6H795V79.9H794ZM795 23.0H796V76.4H795ZM796 19.3H797V77.8H796ZM797 21.2H798V80.1H797ZM798 21.2H800V80.8H798ZM800 22.2H802V80.6H800ZM802 16.2H804V90.2H802ZM804 20.9H806V76.9H804ZM806 19.4H808V80.8H806ZM808 19.6H809V78.7H808ZM809 20.8H810V80.0H809ZM810 19.3H811V77.0H810ZM811 18.1H813V76.7H811ZM813 22.3H814V78.2H813ZM814 19.7H816V81.8H814ZM816 14.6H818V78.4H816ZM818 21.8H820V77.3H818ZM820 22.1H822V80.1H820ZM822 20.4H823V81.0H822ZM823 16.3H825V82.7H823ZM825 21.4H827V78.9H825ZM827 21.0H828V77.2H827ZM828 16.1H830V83.9H828ZM830 18.6H831V85.5H830ZM831 22.4H832V80.1H831ZM832 22.1H833V80.3H832ZM833 16.8H835V79.2H833ZM835 18.8H836V77.5H835ZM836 24.2H837V76.0H836ZM837 22.6H838V85.8H837ZM838 21.1H839V80.1H838ZM839 25.0H841V74.4H839ZM841 24.0H842V77.6H841ZM842 21.8H844V73.3H842ZM844 25.8H845V82.8H844ZM845 27.2H846V72.4H845ZM846 23.5H848V72.6H846ZM848 25.9H849V72.7H848ZM849 21.4H850V77.5H849ZM850 27.3H851V82.3H850ZM851 23.9H853V72.0H851ZM853 26.4H854V71.7H853ZM854 26.5H856V74.1H854ZM856 22.4H857V72.1H856ZM857 25.3H858V78.9H857ZM858 25.6H860V76.6H858ZM860 27.2H862V79.5H860ZM862 23.6H864V76.1H862ZM864 26.1H865V71.7H864ZM865 22.9H867V74.1H865ZM867 24.7H869V73.4H867ZM869 26.5H870V77.4H869ZM870 24.1H871V75.0H870ZM871 24.1H873V73.4H871ZM873 22.3H875V76.9H873ZM875 24.2H876V71.9H875ZM876 26.8H877V82.0H876ZM877 21.5H879V78.3H877ZM879 23.2H881V72.1H879ZM881 26.3H882V73.7H881ZM882 21.8H883V72.4H882ZM883 26.3H885V73.5H883ZM885 27.1H887V73.6H885ZM887 23.0H888V73.5H887ZM888 24.9H889V78.0H888ZM889 27.3H890V74.0H889ZM890 26.9H891V74.4H890ZM891 20.4H892V72.1H891ZM892 26.6H893V71.9H892ZM893 26.8H894V72.7H893ZM894 25.5H895V79.5H894ZM895 23.1H897V78.8H895ZM897 25.4H899V74.8H897ZM899 26.4H901V73.4H899ZM901 26.7H902V77.3H901ZM902 23.6H903V73.3H902ZM903 23.5H905V73.2H903ZM905 26.1H907V71.7H905ZM907 23.9H908V71.7H907ZM908 21.7H910V72.7H908ZM910 24.7H912V71.6H910ZM912 26.2H913V74.7H912ZM913 26.9H914V72.7H913ZM914 25.0H916V74.8H914ZM916 19.1H917V75.5H916ZM917 25.6H919V72.1H917ZM919 27.4H921V75.3H919ZM921 27.1H922V77.6H921ZM922 23.6H924V73.2H922ZM924 26.8H925V75.2H924ZM925 22.4H926V76.0H925ZM926 25.0H927V73.8H926ZM927 26.1H928V74.2H927ZM928 26.8H929V72.0H928ZM929 25.0H930V71.7H929ZM930 26.4H931V75.5H930ZM931 26.4H933V76.2H931ZM933 27.4H935V71.8H933ZM935 23.0H936V73.8H935ZM936 26.5H937V71.9H936ZM937 24.3H939V73.8H937ZM939 23.0H941V73.4H939ZM941 23.8H942V72.8H941ZM942 27.0H943V76.4H942ZM943 26.8H944V77.2H943ZM944 23.8H945V72.1H944ZM945 25.3H947V73.0H945ZM947 20.8H948V78.0H947ZM948 26.4H949V75.4H948ZM949 25.1H950V73.7H949ZM950 23.1H951V73.6H950ZM951 25.6H953V73.2H951ZM953 25.2H954V73.9H953ZM954 27.0H955V74.8H954Z" fill="#0a8236" shape-rendering="crispEdges"/>
<path d="M1 2.5H2V17.6H1ZM2 73.8H3V93.5H2ZM6 74.5H7V79.2H6ZM7 12.7H8V24.4H7ZM11 24.5H12V29.2H11ZM12 23.0H13V24.0H12ZM14 22.4H15V28.9H14ZM15 21.7H16V26.8H15ZM20 17.2H22V21.9H20ZM20 72.3H22V74.2H20ZM22 22.9H24V26.3H22ZM32 70.8H33V77.6H32ZM35 22.3H36V24.3H35ZM38 21.4H39V26.2H38ZM45 68.3H47V74.0H45ZM53 68.7H54V82.0H53ZM54 24.0H56V30.2H54ZM56 24.1H57V27.0H56ZM61 15.2H63V23.5H61ZM65 16.5H67V29.3H65ZM65 77.3H67V92.2H65ZM67 17.9H68V32.3H67ZM67 74.4H68V88.7H67ZM68 20.0H69V25.8H68ZM72 17.6H74V25.4H72ZM72 71.4H74V89.1H72ZM76 16.4H77V29.9H76ZM76 71.7H77V90.5H76ZM77 26.6H78V28.3H77ZM77 71.4H78V82.6H77ZM79 68.4H80V83.5H79ZM80 67.9H81V70.8H80ZM83 19.0H85V33.9H83ZM85 20.3H87V28.7H85ZM87 72.7H88V77.8H87ZM88 15.3H89V29.0H88ZM91 24.0H93V30.3H91ZM94 20.2H96V29.8H94ZM96 20.2H97V30.1H96ZM96 68.0H97V73.7H96ZM99 69.3H100V79.1H99ZM100 70.7H102V78.2H100ZM102 73.2H103V88.6H102ZM103 10.1H104V33.9H103ZM104 20.8H106V27.2H104ZM104 69.9H106V82.3H104ZM106 22.8H108V29.7H106ZM108 66.7H109V77.1H108ZM109 28.3H110V28.5H109ZM109 78.0H110V87.7H109ZM110 16.3H111V26.2H110ZM111 19.6H113V28.4H111ZM113 68.6H114V74.4H113ZM114 71.7H115V83.3H114ZM115 16.5H116V31.1H115ZM115 72.4H116V76.2H115ZM116 23.7H118V34.1H116ZM116 71.0H118V79.3H116ZM120 22.9H122V30.1H120ZM120 69.2H122V79.3H120ZM122 17.3H124V32.8H122ZM122 67.1H124V82.6H122ZM124 28.1H125V32.1H124ZM125 69.6H127V81.2H125ZM127 66.6H129V81.7H127ZM130 64.8H131V81.7H130ZM131 21.1H132V28.2H131ZM131 69.3H132V86.3H131ZM133 18.3H134V31.7H133ZM134 73.7H135V82.3H134ZM135 14.1H136V29.5H135ZM136 65.0H137V83.9H136ZM137 19.7H138V29.6H137ZM137 74.2H138V83.0H137ZM138 24.5H140V29.2H138ZM140 71.8H142V81.7H140ZM142 17.5H143V29.3H142ZM143 17.8H144V26.2H143ZM144 21.8H146V28.3H144ZM146 65.0H148V73.9H146ZM148 20.3H149V29.5H148ZM148 68.0H149V77.0H148ZM149 13.5H150V34.2H149ZM149 65.0H150V79.0H149ZM151 25.9H152V26.5H151ZM151 71.7H152V72.8H151ZM152 22.7H153V32.4H152ZM155 70.6H156V84.1H155ZM160 16.7H161V25.7H160ZM160 65.5H161V78.7H160ZM162 73.7H163V84.1H162ZM163 19.3H164V30.5H163ZM164 18.8H165V33.8H164ZM164 65.2H165V76.9H164ZM165 10.4H166V26.8H165ZM168 70.6H170V83.8H168ZM173 9.5H175V32.1H173ZM181 72.3H182V88.8H181ZM182 11.9H184V24.9H182ZM184 65.7H185V84.9H184ZM185 20.6H186V29.7H185ZM185 70.6H186V73.6H185ZM186 20.6H188V24.1H186ZM186 71.5H188V90.0H186ZM190 10.3H191V30.7H190ZM190 68.3H191V76.7H190ZM192 73.0H193V81.1H192ZM193 20.3H194V27.8H193ZM194 67.4H196V71.1H194ZM196 20.5H198V28.4H196ZM196 69.8H198V85.9H196ZM198 21.9H200V25.3H198ZM198 68.2H200V76.1H198ZM200 7.8H201V22.7H200ZM200 63.9H201V76.2H200ZM201 69.7H203V74.8H201ZM203 66.5H204V70.8H203ZM206 71.7H207V82.7H206ZM209 22.5H211V28.7H209ZM209 66.0H211V77.8H209ZM211 21.8H212V34.0H211ZM212 17.5H214V31.5H212ZM216 69.9H218V81.1H216ZM218 67.7H219V83.0H218ZM219 25.9H221V28.3H219ZM224 68.1H225V82.5H224ZM226 9.2H227V30.8H226ZM226 72.9H227V87.4H226ZM227 25.5H228V28.8H227ZM228 11.3H229V25.3H228ZM229 71.9H230V73.2H229ZM230 68.7H231V88.2H230ZM231 19.5H233V31.7H231ZM231 67.7H233V79.4H231ZM233 17.5H234V28.4H233ZM233 67.6H234V79.5H233ZM234 18.6H236V30.9H234ZM236 16.7H238V22.0H236ZM236 74.5H238V93.5H236ZM239 15.2H241V31.1H239ZM241 76.8H242V86.0H241ZM242 17.3H243V26.1H242ZM243 21.0H245V34.7H243ZM243 69.4H245V79.6H243ZM245 71.9H246V75.5H245ZM246 69.4H248V83.7H246ZM248 66.0H249V75.8H248ZM252 13.1H254V24.8H252ZM252 70.0H254V77.1H252ZM254 25.5H255V26.9H254ZM254 69.2H255V92.0H254ZM257 19.9H258V26.2H257ZM257 70.0H258V77.7H257ZM259 80.2H261V85.6H259ZM265 28.0H266V30.4H265ZM265 70.1H266V88.0H265ZM269 10.3H271V29.4H269ZM269 70.6H271V80.1H269ZM271 24.4H272V26.6H271ZM271 72.4H272V80.8H271ZM272 65.4H273V79.5H272ZM273 26.2H274V27.8H273ZM274 70.6H276V79.3H274ZM278 23.6H279V30.7H278ZM278 68.1H279V77.9H278ZM281 73.4H283V92.0H281ZM286 14.0H287V26.5H286ZM286 73.1H287V81.3H286ZM288 67.4H289V75.1H288ZM289 16.1H290V27.9H289ZM289 66.9H290V80.6H289ZM291 12.4H292V27.8H291ZM291 67.9H292V77.1H291ZM292 23.3H294V28.7H292ZM294 71.8H295V72.0H294ZM296 9.6H298V29.2H296ZM296 71.4H298V73.7H296ZM298 17.6H300V32.1H298ZM298 69.3H300V85.7H298ZM300 20.6H302V25.3H300ZM302 21.3H304V32.6H302ZM304 3.8H306V24.6H304ZM306 10.6H308V29.1H306ZM306 68.2H308V83.0H306ZM308 19.1H309V31.0H308ZM309 69.0H311V77.5H309ZM311 20.5H312V26.0H311ZM311 67.4H312V76.4H311ZM312 6.2H313V24.4H312ZM313 10.6H314V25.7H313ZM314 68.6H316V86.2H314ZM316 23.3H318V23.7H316ZM318 18.3H319V29.9H318ZM318 71.6H319V77.3H318ZM319 67.5H320V73.3H319ZM323 27.5H324V32.9H323ZM323 69.5H324V81.7H323ZM324 25.9H325V32.6H324ZM324 66.4H325V78.9H324ZM328 23.6H329V33.5H328ZM330 66.4H332V77.5H330ZM334 18.0H335V22.2H334ZM334 75.9H335V79.5H334ZM343 23.1H344V29.8H343ZM344 67.4H346V83.0H344ZM346 69.1H348V92.0H346ZM348 64.6H349V79.5H348ZM349 66.0H351V81.0H349ZM353 19.3H354V26.3H353ZM353 66.5H354V80.8H353ZM355 12.1H357V25.3H355ZM355 72.7H357V92.1H355ZM358 27.0H359V27.5H358ZM361 68.3H362V76.1H361ZM362 8.4H363V25.3H362ZM363 7.7H364V27.0H363ZM364 25.1H366V25.3H364ZM366 14.4H368V24.8H366ZM368 67.7H369V86.0H368ZM369 14.4H370V26.4H369ZM369 72.1H370V80.6H369ZM370 68.5H372V71.4H370ZM373 26.2H375V27.6H373ZM373 70.9H375V83.9H373ZM375 19.3H377V28.8H375ZM375 71.4H377V74.3H375ZM377 14.4H378V32.4H377ZM378 23.5H379V31.0H378ZM379 65.2H381V71.8H379ZM381 68.0H382V87.7H381ZM382 9.3H384V25.4H382ZM382 69.9H384V81.6H382ZM384 70.4H385V85.7H384ZM385 19.4H386V28.3H385ZM385 76.6H386V89.5H385ZM386 17.5H387V24.3H386ZM387 20.2H388V30.0H387ZM388 4.6H389V25.4H388ZM388 65.7H389V80.6H388ZM389 67.9H390V93.5H389ZM390 70.8H391V72.7H390ZM391 25.4H392V31.4H391ZM392 26.8H393V28.4H392ZM392 65.8H393V80.3H392ZM393 18.1H394V30.2H393ZM394 26.5H395V29.2H394ZM394 72.3H395V92.2H394ZM396 78.5H398V86.6H396ZM398 71.4H400V73.5H398ZM402 25.9H403V32.1H402ZM403 65.9H405V82.8H403ZM405 14.2H407V29.2H405ZM407 23.8H409V34.3H407ZM407 67.7H409V76.0H407ZM409 15.9H410V29.6H409ZM409 72.8H410V74.1H409ZM410 14.9H411V29.2H410ZM410 69.7H411V71.9H410ZM411 15.7H412V29.5H411ZM412 23.1H414V28.2H412ZM414 72.0H415V85.4H414ZM416 72.6H418V85.5H416ZM418 21.7H419V31.8H418ZM422 70.7H423V92.5H422ZM424 68.2H426V76.4H424ZM426 18.0H427V32.0H426ZM427 69.6H428V71.9H427ZM430 14.6H431V27.4H430ZM430 69.3H431V81.2H430ZM431 67.9H433V74.5H431ZM433 26.1H434V28.5H433ZM433 72.0H434V76.0H433ZM434 9.5H435V33.0H434ZM437 18.6H438V29.2H437ZM440 15.6H441V28.0H440ZM440 76.6H441V81.5H440ZM441 13.3H442V27.3H441ZM441 69.8H442V90.1H441ZM442 20.5H444V30.3H442ZM442 70.4H444V77.0H442ZM445 14.9H447V29.1H445ZM445 70.1H447V73.1H445ZM448 15.1H450V19.5H448ZM452 13.6H453V27.6H452ZM453 19.8H455V25.9H453ZM453 68.8H455V85.6H453ZM455 15.3H457V27.6H455ZM455 68.0H457V80.2H455ZM457 72.2H458V79.1H457ZM458 19.4H460V26.1H458ZM463 19.5H465V23.9H463ZM463 70.2H465V77.2H463ZM465 72.3H466V76.2H465ZM466 72.6H467V83.2H466ZM467 11.2H469V25.6H467ZM469 19.0H471V30.6H469ZM469 75.9H471V93.1H469ZM471 24.3H472V27.5H471ZM471 72.3H472V81.6H471ZM475 18.7H476V27.4H475ZM476 17.6H478V23.7H476ZM476 72.2H478V83.9H476ZM478 73.3H479V86.9H478ZM479 20.7H480V28.3H479ZM479 72.8H480V78.5H479ZM481 25.0H483V29.9H481ZM483 12.6H485V21.6H483ZM485 68.3H486V72.2H485ZM486 23.6H488V31.1H486ZM489 14.5H491V28.6H489ZM492 26.5H494V33.2H492ZM494 73.7H496V80.8H494ZM500 14.9H501V29.3H500ZM500 71.3H501V93.5H500ZM502 15.3H504V29.4H502ZM502 71.7H504V80.3H502ZM504 72.6H505V80.2H504ZM507 20.8H509V28.3H507ZM507 68.3H509V85.8H507ZM509 9.7H511V29.1H509ZM509 68.3H511V79.3H509ZM511 11.4H513V32.3H511ZM513 75.4H514V85.5H513ZM516 66.3H518V76.6H516ZM518 14.5H519V23.6H518ZM519 70.4H521V78.9H519ZM521 23.1H522V30.0H521ZM521 73.5H522V73.8H521ZM522 20.8H524V23.0H522ZM522 69.7H524V82.2H522ZM525 73.0H526V81.2H525ZM526 12.4H528V25.0H526ZM526 74.2H528V83.1H526ZM528 10.5H529V27.0H528ZM529 75.6H531V76.2H529ZM531 67.9H532V80.0H531ZM532 18.4H533V26.4H532ZM533 26.7H535V31.1H533ZM533 65.5H535V81.6H533ZM535 69.5H536V86.1H535ZM537 23.0H539V28.2H537ZM540 6.0H542V25.2H540ZM542 13.1H544V28.0H542ZM544 22.1H545V24.9H544ZM544 70.7H545V82.6H544ZM547 3.0H549V26.1H547ZM551 73.6H552V80.8H551ZM552 70.2H553V75.1H552ZM553 27.3H554V32.6H553ZM556 14.7H557V23.6H556ZM556 66.3H557V83.4H556ZM557 69.5H559V72.6H557ZM559 9.8H561V31.3H559ZM559 70.7H561V73.9H559ZM561 18.5H562V28.7H561ZM561 70.4H562V80.8H561ZM568 12.2H570V23.5H568ZM568 66.8H570V72.9H568ZM570 70.9H571V77.5H570ZM571 68.1H572V83.2H571ZM573 13.4H574V20.4H573ZM573 66.5H574V80.7H573ZM577 26.0H579V28.1H577ZM577 69.2H579V73.7H577ZM579 16.1H581V22.8H579ZM579 71.7H581V83.8H579ZM581 13.8H582V31.5H581ZM582 70.2H583V75.6H582ZM583 69.6H585V75.9H583ZM585 24.3H586V30.9H585ZM585 72.0H586V79.6H585ZM586 20.9H588V26.0H586ZM588 68.2H589V71.5H588ZM590 18.5H591V27.5H590ZM590 67.9H591V79.0H590ZM591 70.7H593V88.2H591ZM593 26.5H594V33.0H593ZM594 19.5H595V25.3H594ZM597 17.3H598V26.2H597ZM598 27.5H599V32.4H598ZM598 72.0H599V80.3H598ZM599 9.7H600V23.2H599ZM599 73.7H600V76.0H599ZM602 69.3H604V80.8H602ZM604 68.3H605V75.2H604ZM605 7.5H606V29.3H605ZM605 76.1H606V80.1H605ZM606 70.6H607V77.1H606ZM609 72.2H611V78.5H609ZM611 72.2H613V87.4H611ZM615 24.4H616V25.7H615ZM615 75.0H616V81.6H615ZM616 22.4H618V24.0H616ZM618 10.3H620V29.8H618ZM620 16.8H621V20.4H620ZM624 2.5H626V25.5H624ZM624 72.1H626V74.8H624ZM626 70.3H628V78.4H626ZM629 73.3H630V81.0H629ZM631 12.5H633V23.3H631ZM631 70.1H633V78.5H631ZM635 3.8H636V30.0H635ZM635 73.7H636V74.1H635ZM636 74.5H637V82.9H636ZM638 70.8H639V73.5H638ZM639 22.7H641V30.1H639ZM643 66.5H644V81.8H643ZM647 17.1H648V29.5H647ZM647 71.6H648V80.1H647ZM648 24.5H649V26.5H648ZM649 2.8H650V29.3H649ZM652 72.0H653V76.8H652ZM653 16.2H654V30.6H653ZM654 20.5H656V26.2H654ZM656 25.3H658V27.3H656ZM656 71.7H658V77.9H656ZM658 77.0H660V87.6H658ZM660 71.5H661V79.5H660ZM661 71.7H663V82.2H661ZM663 8.4H664V28.9H663ZM668 16.3H670V30.2H668ZM670 67.7H672V93.5H670ZM672 17.0H674V31.3H672ZM677 69.4H678V86.3H677ZM680 24.1H681V27.3H680ZM681 70.3H682V80.4H681ZM683 17.9H684V28.4H683ZM685 23.0H687V23.2H685ZM688 71.4H689V76.3H688ZM690 22.6H691V26.2H690ZM691 70.3H692V76.1H691ZM692 68.2H693V76.9H692ZM693 17.5H695V32.6H693ZM695 18.0H696V30.0H695ZM696 5.1H697V24.4H696ZM697 79.0H699V79.9H697ZM700 75.4H702V83.3H700ZM702 68.7H704V73.6H702ZM705 82.0H707V86.9H705ZM713 5.2H715V23.4H713ZM713 68.7H715V83.0H713ZM715 73.3H716V85.8H715ZM716 70.4H717V89.1H716ZM720 24.6H721V30.2H720ZM720 71.3H721V80.6H720ZM721 22.6H722V31.6H721ZM722 7.5H724V30.6H722ZM722 72.3H724V79.2H722ZM724 19.0H725V25.9H724ZM725 7.6H727V28.9H725ZM725 73.1H727V93.5H725ZM728 9.0H729V25.8H728ZM728 71.7H729V81.5H728ZM730 66.8H732V78.2H730ZM732 70.7H734V79.7H732ZM734 8.5H736V17.7H734ZM734 76.5H736V82.1H734ZM736 68.3H738V81.8H736ZM738 73.3H740V77.0H738ZM740 70.5H742V76.2H740ZM742 71.2H743V74.2H742ZM743 15.6H744V27.3H743ZM743 75.1H744V88.1H743ZM745 17.3H747V25.2H745ZM747 2.5H748V20.1H747ZM747 67.6H748V81.1H747ZM749 18.5H750V29.4H749ZM752 71.9H753V83.5H752ZM755 18.3H757V28.1H755ZM759 12.9H760V21.9H759ZM760 15.8H762V27.8H760ZM762 76.1H764V93.5H762ZM764 75.5H766V75.5H764ZM767 69.9H768V85.9H767ZM768 71.1H769V80.5H768ZM769 8.5H771V27.4H769ZM773 19.1H774V24.9H773ZM773 72.6H774V81.7H773ZM774 78.5H776V80.1H774ZM776 70.7H777V85.4H776ZM777 70.9H779V85.7H777ZM779 13.5H781V24.5H779ZM781 7.8H783V21.6H781ZM783 69.4H784V74.8H783ZM786 10.5H788V22.5H786ZM788 76.6H790V88.4H788ZM793 11.1H794V18.2H793ZM795 23.0H796V27.8H795ZM795 71.3H796V76.4H795ZM804 10.7H806V27.5H804ZM809 76.8H810V80.0H809ZM814 79.1H816V90.3H814ZM831 18.9H832V25.9H831ZM832 22.1H833V28.6H832ZM833 76.9H835V89.2H833ZM836 10.4H837V25.5H836ZM836 69.3H837V80.7H836ZM837 13.1H838V27.5H837ZM838 16.3H839V27.4H838ZM839 68.2H841V74.4H839ZM841 24.0H842V28.7H841ZM841 72.0H842V88.5H841ZM842 12.9H844V22.4H842ZM842 66.8H844V78.1H842ZM844 80.7H845V93.5H844ZM845 68.7H846V72.4H845ZM848 69.7H849V79.5H848ZM849 16.0H850V22.4H849ZM850 27.3H851V30.3H850ZM851 23.9H853V24.2H851ZM851 67.1H853V72.0H851ZM853 26.4H854V31.3H853ZM854 71.3H856V82.8H854ZM856 16.9H857V27.6H856ZM857 76.8H858V93.5H857ZM858 16.8H860V30.9H858ZM860 73.6H862V82.7H860ZM862 19.2H864V28.2H862ZM862 75.5H864V93.5H862ZM865 15.5H867V25.9H865ZM867 70.2H869V88.3H867ZM869 23.3H870V29.1H869ZM871 10.4H873V26.2H871ZM871 67.1H873V80.3H871ZM873 73.1H875V82.9H873ZM876 7.7H877V30.4H876ZM879 18.8H881V26.3H879ZM881 67.3H882V73.7H881ZM882 14.5H883V22.7H882ZM885 22.2H887V29.2H885ZM888 21.9H889V27.2H888ZM889 69.3H890V74.0H889ZM891 10.2H892V22.0H891ZM891 69.6H892V84.6H891ZM892 26.6H893V28.6H892ZM892 71.4H893V77.8H892ZM893 26.8H894V33.3H893ZM894 20.8H895V32.1H894ZM895 15.0H897V24.4H895ZM895 72.7H897V93.5H895ZM897 15.0H899V29.5H897ZM897 73.7H899V79.5H897ZM899 67.6H901V79.2H899ZM901 71.2H902V85.9H901ZM903 66.5H905V82.2H903ZM905 19.9H907V30.9H905ZM905 70.2H907V75.9H905ZM907 66.7H908V82.7H907ZM910 20.7H912V27.2H910ZM910 69.1H912V71.6H910ZM912 73.4H913V90.0H912ZM916 13.7H917V25.2H916ZM916 71.0H917V83.1H916ZM917 66.6H919V93.5H917ZM921 14.6H922V32.5H921ZM921 72.9H922V84.3H921ZM922 19.1H924V25.5H922ZM924 14.0H925V28.9H924ZM926 71.9H927V81.4H926ZM927 67.7H928V80.1H927ZM928 69.4H929V75.9H928ZM929 70.8H930V77.6H929ZM933 19.5H935V27.8H933ZM933 69.4H935V77.1H933ZM935 5.8H936V29.7H935ZM935 68.6H936V84.7H935ZM937 70.3H939V78.4H937ZM941 71.4H942V80.5H941ZM943 71.8H944V93.0H943ZM944 67.1H945V82.1H944ZM947 77.6H948V84.4H947ZM948 16.3H949V31.1H948ZM949 21.5H950V29.6H949ZM949 70.7H950V83.7H949ZM950 68.1H951V73.6H950ZM953 19.8H954V29.8H953Z" fill="#cd0f1b" shape-rendering="crispEdges"/>
<text transform="translate(4.23,14.70) scale(1.0735,1)" x="0" y="0" font-size="16" fill="#1a1a1a" >Time</text>
<rect x="0" y="100.5" width="955" height="1.5" fill="#111"/>
<rect x="69.5" y="101" width="1.5" height="7" fill="#111"/>
<text x="70.0" y="122.8" font-size="13.6" text-anchor="middle" fill="#111" stroke="#111" stroke-width="0.2">400m</text>
<rect x="146.4" y="101" width="1.5" height="7" fill="#111"/>
<text x="146.9" y="122.8" font-size="13.6" text-anchor="middle" fill="#111" stroke="#111" stroke-width="0.2">800m</text>
<rect x="223.3" y="101" width="1.5" height="7" fill="#111"/>
<text x="223.8" y="122.8" font-size="13.6" text-anchor="middle" fill="#111" stroke="#111" stroke-width="0.2">1.2</text>
<rect x="300.2" y="101" width="1.5" height="7" fill="#111"/>
<text x="300.7" y="122.8" font-size="13.6" text-anchor="middle" fill="#111" stroke="#111" stroke-width="0.2">1.6</text>
<rect x="377.1" y="101" width="1.5" height="7" fill="#111"/>
<text x="377.6" y="122.8" font-size="13.6" text-anchor="middle" fill="#111" stroke="#111" stroke-width="0.2">2</text>
<rect x="454.0" y="101" width="1.5" height="7" fill="#111"/>
<text x="454.5" y="122.8" font-size="13.6" text-anchor="middle" fill="#111" stroke="#111" stroke-width="0.2">2.4</text>
<rect x="530.9" y="101" width="1.5" height="7" fill="#111"/>
<text x="531.4" y="122.8" font-size="13.6" text-anchor="middle" fill="#111" stroke="#111" stroke-width="0.2">2.8</text>
<rect x="607.8" y="101" width="1.5" height="7" fill="#111"/>
<text x="608.3" y="122.8" font-size="13.6" text-anchor="middle" fill="#111" stroke="#111" stroke-width="0.2">3.2</text>
<rect x="684.7" y="101" width="1.5" height="7" fill="#111"/>
<text x="685.2" y="122.8" font-size="13.6" text-anchor="middle" fill="#111" stroke="#111" stroke-width="0.2">3.6</text>
<rect x="761.6" y="101" width="1.5" height="7" fill="#111"/>
<text x="762.1" y="122.8" font-size="13.6" text-anchor="middle" fill="#111" stroke="#111" stroke-width="0.2">4</text>
<rect x="838.5" y="101" width="1.5" height="7" fill="#111"/>
<text x="839.0" y="122.8" font-size="13.6" text-anchor="middle" fill="#111" stroke="#111" stroke-width="0.2">4.4</text>
<rect x="915.4" y="101" width="1.5" height="7" fill="#111"/>
<text x="915.9" y="122.8" font-size="13.6" text-anchor="middle" fill="#111" stroke="#111" stroke-width="0.2">4.8</text>
<rect x="0" y="114.2" width="1" height="7.3" fill="#ffffff"/>
<rect x="0" y="125.5" width="956" height="1.5" fill="#ffffff"/>
<rect x="955" y="0" width="1.5" height="127" fill="#ffffff"/>
<rect x="0" y="133.8" width="955" height="1.3" fill="#a0a0a0"/>
<rect x="955" y="134" width="1.3" height="290" fill="#ffffff"/>
<rect x="0" y="422.2" width="956.3" height="1.4" fill="#ffffff"/>
<rect x="28.5" y="136" width="1.6" height="263" fill="#111"/>
<rect x="22.5" y="136.3" width="7" height="1.5" fill="#111"/>
<text x="19.5" y="147.0" font-size="13.4" text-anchor="end" fill="#111" stroke="#111" stroke-width="0.2">0</text>
<rect x="22.5" y="179.8" width="7" height="1.5" fill="#111"/>
<text x="19.5" y="185.0" font-size="13.4" text-anchor="end" fill="#111" stroke="#111" stroke-width="0.2">-10</text>
<rect x="22.5" y="223.3" width="7" height="1.5" fill="#111"/>
<text x="19.5" y="228.4" font-size="13.4" text-anchor="end" fill="#111" stroke="#111" stroke-width="0.2">-20</text>
<rect x="22.5" y="266.8" width="7" height="1.5" fill="#111"/>
<text x="19.5" y="271.9" font-size="13.4" text-anchor="end" fill="#111" stroke="#111" stroke-width="0.2">-30</text>
<rect x="22.5" y="310.3" width="7" height="1.5" fill="#111"/>
<text x="19.5" y="315.3" font-size="13.4" text-anchor="end" fill="#111" stroke="#111" stroke-width="0.2">-40</text>
<rect x="22.5" y="353.8" width="7" height="1.5" fill="#111"/>
<text x="19.5" y="358.8" font-size="13.4" text-anchor="end" fill="#111" stroke="#111" stroke-width="0.2">-50</text>
<rect x="22.5" y="397.3" width="7" height="1.5" fill="#111"/>
<text x="19.5" y="394.9" font-size="13.4" text-anchor="end" fill="#111" stroke="#111" stroke-width="0.2">-60</text>
<rect x="22.5" y="397.3" width="933" height="1.6" fill="#111"/>
<rect x="95.1" y="398" width="1.5" height="7" fill="#111"/>
<text x="95.8" y="419.6" font-size="13.4" text-anchor="middle" fill="#111" stroke="#111" stroke-width="0.2">20</text>
<rect x="210.1" y="398" width="1.5" height="7" fill="#111"/>
<text x="210.8" y="419.6" font-size="13.4" text-anchor="middle" fill="#111" stroke="#111" stroke-width="0.2">50</text>
<rect x="297.2" y="398" width="1.5" height="7" fill="#111"/>
<text x="297.9" y="419.6" font-size="13.4" text-anchor="middle" fill="#111" stroke="#111" stroke-width="0.2">100</text>
<rect x="384.3" y="398" width="1.5" height="7" fill="#111"/>
<text x="385.0" y="419.6" font-size="13.4" text-anchor="middle" fill="#111" stroke="#111" stroke-width="0.2">200</text>
<rect x="499.3" y="398" width="1.5" height="7" fill="#111"/>
<text x="500.0" y="419.6" font-size="13.4" text-anchor="middle" fill="#111" stroke="#111" stroke-width="0.2">500</text>
<rect x="586.4" y="398" width="1.5" height="7" fill="#111"/>
<text x="587.1" y="419.6" font-size="13.4" text-anchor="middle" fill="#111" stroke="#111" stroke-width="0.2">1k</text>
<rect x="673.5" y="398" width="1.5" height="7" fill="#111"/>
<text x="674.2" y="419.6" font-size="13.4" text-anchor="middle" fill="#111" stroke="#111" stroke-width="0.2">2k</text>
<rect x="788.5" y="398" width="1.5" height="7" fill="#111"/>
<text x="789.2" y="419.6" font-size="13.4" text-anchor="middle" fill="#111" stroke="#111" stroke-width="0.2">5k</text>
<rect x="875.6" y="398" width="1.5" height="7" fill="#111"/>
<text x="876.3" y="419.6" font-size="13.4" text-anchor="middle" fill="#111" stroke="#111" stroke-width="0.2">10k</text>
<text transform="translate(40.12,150.80) scale(1.0222,1)" x="0" y="0" font-size="16" fill="#1a1a1a" >Frequency</text>
<polyline points="898.0,177.2 899.0,178.8 900.0,180.4 901.0,182.1 902.0,183.7 903.0,185.4 904.0,187.1 905.0,188.8 906.0,190.5 907.0,192.2 908.0,193.9 909.0,195.6 910.0,197.4 911.0,199.1 912.0,200.9 913.0,202.6 914.0,204.4 915.0,206.1 916.0,207.9 917.0,209.6 918.0,211.4 919.0,213.2 920.0,215.0 921.0,216.7 922.0,218.5 923.0,220.3 924.0,222.1 925.0,223.9 926.0,225.7 927.0,227.5 928.0,229.3 929.0,231.0 930.0,232.8 931.0,234.6 932.0,236.4 933.0,238.2 934.0,240.0 935.0,241.8 936.0,243.6 937.0,245.4 938.0,247.2 939.0,249.0 940.0,250.8 941.0,252.6 942.0,254.4 943.0,256.2 944.0,258.0 945.0,259.8 946.0,261.6 947.0,263.4 948.0,265.2 949.0,267.0 950.0,268.8 951.0,270.6 952.0,272.5 953.0,274.3 954.0,276.1 955.0,277.9" stroke="#4a78c0" stroke-width="1" fill="none"/>
<polyline points="29.0,194.3 116.7,172.7 165.8,197.2 231.5,255.8 253.2,264.3 274.2,264.3 290.5,232.7 304.7,228.6 318.3,243.6 330.5,244.9 340.8,249.7 350.3,252.4 359.8,253.0 370.0,243.6 376.8,227.3 384.9,223.2 392.4,245.6 399.2,251.0 405.9,249.7 412.0,251.0 417.5,238.8 422.2,236.8 430.3,247.0 438.5,253.0 446.6,248.3 452.7,239.5 461.5,244.2 468.3,225.3 475.8,239.5 482.5,245.6 487.3,236.1 492.1,219.0 504.6,225.2 512.6,245.7 520.6,217.2 527.7,222.5 537.5,212.7 546.4,228.8 548.8,218.8 551.1,213.8 553.5,210.1 556.8,213.7 560.0,224.4 563.3,226.1 565.4,216.3 567.4,208.5 569.5,196.7 572.8,199.6 576.0,209.8 579.3,216.3 581.1,204.3 582.8,186.2 584.6,170.9 585.5,180.2 586.4,185.0 587.3,186.9 588.8,181.6 590.3,174.1 591.8,174.5 593.9,182.4 595.9,182.4 598.0,191.4 601.0,174.8 603.9,169.1 606.9,154.9 609.0,170.5 611.0,182.9 613.1,192.3 613.7,202.0 614.3,200.9 614.9,209.2 616.7,201.0 618.4,196.9 620.2,195.8 622.0,205.5 623.8,203.0 625.6,211.9 627.4,215.9 629.1,221.8 630.9,233.2 633.3,225.0 635.6,220.7 638.0,220.7 639.8,209.9 641.6,198.7 643.4,192.3 643.4,199.2 643.9,206.0 644.4,209.0 644.9,205.5 645.4,203.4 645.9,200.4 646.4,208.1 646.9,209.0 647.4,226.3 647.9,208.4 648.4,222.9 648.9,229.4 649.4,209.2 649.9,208.8 650.4,204.4 650.9,186.8 651.4,203.0 651.9,208.9 652.4,205.8 652.9,207.2 653.4,212.5 653.9,205.9 654.4,204.6 654.9,201.3 655.4,203.9 655.9,210.7 656.4,214.5 656.9,208.6 657.4,208.1 657.9,211.6 658.4,211.5 658.9,210.6 659.4,210.8 659.9,208.5 660.4,212.0 660.9,209.3 661.4,198.0 661.9,209.4 662.4,212.4 662.9,215.7 663.4,190.4 663.9,198.8 664.4,232.3 664.9,208.0 665.4,206.6 665.9,207.3 666.4,210.1 666.9,202.3 667.4,201.6 667.9,207.9 668.4,208.9 668.9,205.5 669.4,205.2 669.9,216.3 670.4,206.0 670.9,204.0 671.4,204.1 671.9,200.9 672.4,203.8 672.9,207.8 673.4,201.1 673.9,204.2 674.4,206.4 674.9,201.9 675.4,207.3 675.9,200.7 676.4,228.3 676.9,200.0 677.4,211.8 677.9,199.1 678.4,202.7 678.9,204.9 679.4,208.9 679.9,200.5 680.4,206.1 680.9,205.8 681.4,202.0 681.9,205.7 682.4,202.3 682.9,202.2 683.4,200.9 683.9,194.3 684.4,204.3 684.9,200.3 685.4,197.3 685.9,195.6 686.4,198.9 686.9,197.9 687.4,199.0 687.9,201.4 688.4,190.8 688.9,196.6 689.4,190.2 689.9,191.3 690.4,201.2 690.9,191.1 691.4,197.9 691.9,194.1 692.4,203.6 692.9,198.3 693.4,199.2 693.9,196.6 694.4,199.9 694.9,203.2 695.4,201.6 695.9,203.4 696.4,207.7 696.9,201.1 697.4,206.5 697.9,202.1 698.4,207.7 698.9,200.3 699.4,202.4 699.9,202.4 700.4,201.3 700.9,206.8 701.4,204.8 701.9,206.7 702.4,210.7 702.9,205.8 703.4,199.0 703.9,208.0 704.4,207.7 704.9,196.9 705.4,196.1 705.9,202.6 706.4,201.2 706.9,204.2 707.4,205.1 707.9,197.2 708.4,196.9 708.9,199.9 709.4,202.2 709.9,196.0 710.4,197.7 710.9,197.2 711.4,199.2 711.9,196.4 712.4,203.0 712.9,194.0 713.4,194.9 713.9,200.0 714.4,199.0 714.9,195.7 715.5,235.0 715.9,197.5 716.4,188.7 716.9,189.2 717.4,196.7 717.9,195.2 718.4,192.5 718.9,195.2 719.4,191.1 719.9,193.2 720.4,185.6 720.9,186.2 721.4,194.8 721.9,188.7 722.4,171.6 722.9,184.7 723.4,190.2 723.9,180.1 724.4,192.9 724.9,174.8 725.4,179.5 725.9,179.0 726.4,177.8 726.9,185.1 727.4,187.3 727.9,178.5 728.4,185.2 728.9,183.4 729.4,173.8 729.9,176.8 730.4,176.6 730.9,180.9 731.4,172.5 731.9,176.4 732.4,176.9 732.9,178.8 733.4,178.0 733.9,173.1 734.4,170.3 734.9,177.7 735.4,174.6 735.9,174.5 736.4,182.7 736.9,177.0 737.4,176.5 737.9,186.3 738.4,175.7 738.9,175.7 739.4,185.0 739.9,180.3 740.4,178.4 740.9,183.6 741.4,183.8 741.9,189.1 742.4,182.0 742.9,180.9 743.4,186.0 743.9,187.8 744.4,179.6 744.9,195.0 745.4,191.2 745.9,186.2 746.4,189.3 746.9,191.7 747.4,190.5 747.9,193.8 748.4,188.5 748.9,195.4 749.4,194.2 749.9,195.0 750.4,197.5 750.9,191.3 751.4,199.3 751.9,190.2 752.4,193.8 752.9,199.4 753.4,192.8 753.9,193.3 754.4,181.0 754.9,192.2 755.4,203.8 755.9,199.6 756.4,198.6 756.9,185.3 757.4,193.1 757.9,197.9 758.4,179.1 758.9,177.9 759.4,186.9 759.9,177.1 760.4,178.3 760.9,173.2 761.4,178.5 761.9,188.0 762.4,174.2 762.9,173.1 763.4,176.2 763.9,179.1 764.4,173.9 764.9,178.1 765.4,169.3 765.9,173.2 766.4,176.7 766.9,174.3 767.4,178.9 767.9,180.1 768.4,184.1 768.9,183.7 769.4,177.4 769.9,180.8 770.4,186.5 770.9,182.7 771.4,186.7 771.9,185.8 772.4,183.7 772.9,182.4 773.4,189.8 773.9,188.7 774.4,192.3 774.9,185.0 775.4,183.1 775.9,195.3 776.4,200.6 776.9,191.2 777.4,194.8 777.9,197.4 778.4,187.0 778.9,197.1 779.4,193.8 779.9,191.7 780.4,203.2 780.9,194.7 781.4,197.5 781.9,199.1 782.4,196.2 782.9,198.8 783.4,189.1 783.9,205.1 784.4,190.8 784.9,195.9 785.4,199.1 785.9,191.0 786.4,191.5 786.9,193.1 787.4,195.0 787.9,196.0 788.4,195.1 788.9,191.7 789.4,188.3 789.9,189.7 790.4,199.0 790.9,194.5 791.4,195.1 791.9,201.7 792.4,197.4 792.9,199.9 793.4,206.8 793.9,197.2 794.4,207.9 794.9,203.3 795.4,194.8 795.9,206.1 796.4,204.1 796.9,203.8 797.4,203.4 797.9,206.9 798.4,207.1 798.9,200.3 799.4,202.6 799.9,194.0 800.4,206.3 800.9,207.0 801.4,204.3 801.9,214.7 802.4,209.2 802.9,212.5 803.4,189.5 803.9,212.4 804.4,224.4 804.9,194.7 805.4,201.8 805.9,194.3 806.4,196.1 806.9,206.4 807.4,201.3 807.9,195.7 808.4,203.7 808.9,208.4 809.4,198.2 809.9,210.1 810.4,205.1 810.9,223.6 811.4,203.2 811.9,210.5 812.4,208.8 812.9,209.1 813.4,208.2 813.9,207.5 814.4,205.6 814.9,212.9 815.4,207.6 815.9,210.0 816.4,204.6 816.9,191.2 817.4,208.5 817.9,211.0 818.4,207.7 818.9,205.0 819.4,211.9 819.9,210.6 820.4,210.6 820.9,210.0 821.4,205.5 821.9,209.2 822.4,205.4 822.9,210.6 823.4,210.6 823.9,227.7 824.4,205.1 824.9,195.1 825.4,207.3 825.9,226.7 826.4,211.6 826.9,209.3 827.4,211.0 827.9,201.9 828.4,214.5 828.9,203.5 829.4,204.4 829.9,204.2 830.4,205.4 830.9,218.5 831.4,191.3 831.9,208.6 832.4,213.9 832.9,217.0 833.4,211.7 833.9,218.4 834.4,214.4 834.9,218.7 835.4,201.5 835.9,210.8 836.4,224.3 836.9,212.5 837.4,211.9 837.9,206.3 838.4,202.8 838.9,213.4 839.4,210.7 839.9,210.4 840.4,216.0 840.9,205.6 841.4,224.9 841.9,223.2 842.4,210.2 842.9,210.3 843.4,217.8 843.9,213.9 844.4,208.3 844.9,207.8 845.4,212.7 845.9,215.9 846.4,205.0 846.9,212.2 847.4,212.5 847.9,216.6 848.4,212.1 848.9,206.1 849.4,215.4 849.9,196.0 850.4,209.1 850.9,212.5 851.4,216.7 851.9,212.4 852.4,213.5 852.9,210.2 853.4,204.0 853.9,211.9 854.4,228.1 854.9,213.9 855.4,207.5 855.9,219.1 856.4,206.2 856.9,208.8 857.4,218.2 857.9,223.4 858.4,218.7 858.9,198.0 859.4,209.2 859.9,224.5 860.4,215.6 860.9,208.0 861.4,217.9 861.9,217.6 862.4,210.3 862.9,217.5 863.4,220.3 863.9,221.7 864.4,214.4 864.9,204.5 865.4,216.6 865.9,212.7 866.4,213.5 866.9,220.3 867.4,209.9 867.9,217.4 868.4,215.2 868.9,218.2 869.4,213.0 869.9,205.6 870.4,207.5 870.9,210.0 871.4,207.8 871.9,201.6 872.4,204.4 872.9,204.4 873.4,196.6 873.9,204.7 874.4,206.2 874.9,199.3 875.4,208.5 875.9,195.8 876.4,207.6 876.9,199.2 877.4,200.3 877.9,202.6 878.4,211.5 878.9,199.9 879.4,201.4 879.9,205.8 880.4,200.7 880.9,210.3 881.4,205.1 881.9,197.9 882.4,186.4 882.9,199.1 883.4,201.3 883.9,176.9 884.4,206.2 884.9,196.8 885.4,209.8 885.9,207.2 886.4,192.1 886.9,202.3 887.4,191.9 887.9,193.6 888.4,202.4 888.9,193.0 889.4,202.2 889.9,202.3 890.4,197.9 890.9,201.9 891.4,193.6 891.9,211.2 892.4,189.1 892.9,204.9 893.4,202.0 893.9,198.5 894.4,204.5 894.9,183.7 895.4,194.9 895.9,188.6 896.4,211.8 896.9,196.0 897.4,206.1 897.9,201.9 898.4,195.1 898.9,205.9 899.4,197.4 899.9,180.3 900.4,202.0 900.9,203.8 901.4,194.1 901.9,202.6 902.4,193.4 902.9,202.7 903.4,194.0 903.9,213.6 904.4,210.0 904.9,202.3 905.4,209.4 905.9,189.5 906.4,202.0 906.9,205.7 907.4,201.9 907.9,216.0 908.4,208.5 908.9,207.3 909.4,200.1 909.9,190.2 910.4,203.0 910.9,205.2 911.4,203.4 911.9,210.2 912.4,216.0 912.9,208.4 913.4,222.4 913.9,194.8 914.4,203.9 914.9,195.6 915.4,207.3 915.9,223.8 916.4,213.4 916.9,224.8 917.4,216.1 917.9,219.9 918.4,215.5 918.9,222.5 919.4,220.9 919.9,218.1 920.4,221.0 920.9,219.3 921.4,226.0 921.9,221.7 922.4,232.7 922.9,227.7 923.4,214.7 923.9,227.6 924.4,213.0 924.9,222.8 925.4,218.5 925.9,229.3 926.4,228.7 926.9,224.5 927.4,229.8 927.9,228.2 928.4,236.3 928.9,229.5 929.4,227.6 929.9,225.2 930.4,235.6 930.9,245.1 931.4,243.9 931.9,237.3 932.4,232.0 932.9,236.3 933.4,238.2 933.9,234.5 934.4,238.8 934.9,242.2 935.4,242.0 935.9,247.4 936.4,242.0 936.9,243.4 937.4,233.9 937.9,244.9 938.4,243.3 938.9,247.9 939.4,249.7 939.9,253.9 940.4,245.7 940.9,256.1 941.4,253.2 941.9,243.9 942.4,246.4 942.9,260.5 943.4,253.2 943.9,250.0 944.4,248.2 944.9,249.8 945.4,257.9 945.9,260.7 946.4,263.0 946.9,265.4 947.4,263.9 947.9,268.0 948.4,259.9 948.9,268.2 949.4,263.7 949.9,273.2 950.4,265.6 950.9,272.8 951.4,268.0 951.9,275.1 952.4,261.5 952.9,270.7 953.4,277.7 953.9,282.1 954.4,271.4 954.9,290.3" stroke="#d01f24" stroke-width="1.1" fill="none" stroke-linejoin="miter"/>
<polyline points="29.0,184.3 115.7,163.9 165.8,192.4 232.2,245.6 243.7,245.6 255.9,244.2 273.6,248.3 290.5,223.2 304.7,219.8 318.3,237.2 330.5,238.5 340.0,241.5 359.8,249.7 370.0,241.5 376.8,213.7 384.9,209.7 392.4,233.4 398.5,242.9 407.3,243.6 412.7,246.3 416.8,238.1 422.9,230.7 429.0,235.4 438.5,249.7 448.0,244.2 461.5,250.3 468.3,218.5 475.1,238.1 479.2,240.8 484.6,232.0 492.1,212.7 503.7,227.0 519.7,210.1 525.0,228.8 530.4,208.3 541.9,215.4 544.0,210.4 546.1,210.7 548.2,213.6 549.4,215.6 550.5,221.2 551.7,222.5 553.2,213.0 554.7,206.5 556.2,203.8 558.0,206.5 559.7,216.3 561.5,219.0 563.9,211.7 566.2,212.8 568.6,206.5 571.0,205.3 573.3,197.9 575.7,198.5 577.8,198.5 579.9,197.4 582.0,197.6 584.1,199.2 586.1,206.8 588.2,204.7 590.9,191.3 593.5,180.8 596.2,175.4 598.0,183.5 599.7,182.8 601.5,187.8 603.3,174.7 605.1,165.5 606.9,156.7 609.0,159.4 611.0,168.5 613.1,168.3 614.9,173.1 616.7,180.6 618.5,190.5 619.7,186.8 620.8,182.1 622.0,177.2 623.2,196.4 624.4,210.4 625.6,222.5 626.8,201.6 627.9,180.7 629.1,163.8 630.3,187.6 631.5,209.7 632.7,226.1 634.5,217.7 636.2,219.9 638.0,213.6 639.8,207.4 641.6,196.0 643.4,185.2 643.4,195.1 643.9,201.9 644.4,195.5 644.9,201.0 645.4,187.8 645.9,197.0 646.4,202.2 646.9,201.9 647.4,200.3 647.9,208.0 648.4,192.1 648.9,207.5 649.4,199.0 649.9,204.0 650.4,201.6 650.9,205.6 651.4,208.1 651.9,199.4 652.4,204.3 652.9,206.2 653.4,207.0 653.9,201.5 654.4,207.4 654.9,204.7 655.4,226.0 655.9,204.2 656.4,207.8 656.9,206.6 657.4,206.9 657.9,216.9 658.4,200.6 658.9,203.1 659.4,208.6 659.9,208.9 660.4,205.4 660.9,207.8 661.4,201.9 661.9,212.4 662.4,207.9 662.9,199.8 663.4,204.9 663.9,207.1 664.4,214.4 664.9,205.3 665.4,200.7 665.9,206.8 666.4,196.3 666.9,199.7 667.4,209.4 667.9,199.1 668.4,202.3 668.9,193.4 669.4,206.7 669.9,198.9 670.4,212.4 670.9,204.8 671.4,201.9 671.9,209.6 672.4,190.2 672.9,207.6 673.4,199.3 673.9,199.5 674.4,204.6 674.9,189.3 675.4,199.3 675.9,200.0 676.4,206.3 676.9,199.3 677.4,216.7 677.9,200.0 678.4,204.4 678.9,199.1 679.4,208.3 679.9,211.3 680.4,196.5 680.9,190.3 681.4,192.5 681.9,200.5 682.4,189.1 682.9,198.3 683.4,191.6 683.9,191.1 684.4,198.5 684.9,195.8 685.4,192.0 685.9,188.2 686.4,192.9 686.9,194.0 687.4,187.9 687.9,190.7 688.4,183.2 688.9,167.4 689.4,189.8 689.9,191.2 690.4,181.8 690.9,193.5 691.4,192.6 691.9,196.1 692.4,195.8 692.9,191.0 693.4,197.6 693.9,198.8 694.4,193.7 694.9,187.4 695.4,194.6 695.9,199.5 696.4,196.0 696.9,196.8 697.4,186.8 697.9,216.1 698.4,186.5 698.9,220.4 699.4,203.5 699.9,203.4 700.4,198.3 700.9,197.8 701.4,200.8 701.9,199.2 702.4,205.9 702.9,201.5 703.4,200.5 703.9,204.4 704.4,195.5 704.9,195.9 705.4,201.5 705.9,198.9 706.4,202.7 706.9,202.7 707.4,195.5 707.9,202.7 708.4,203.0 708.9,197.1 709.4,197.1 709.9,190.9 710.4,199.9 710.9,206.1 711.4,190.6 711.9,195.4 712.4,198.9 712.9,193.3 713.4,189.3 713.9,202.0 714.4,195.8 714.9,192.3 715.4,195.7 716.0,228.0 716.4,196.7 716.9,187.9 717.4,194.3 717.9,191.7 718.4,190.2 718.9,197.7 719.4,193.9 719.9,186.4 720.4,194.8 720.9,182.1 721.4,193.1 721.9,186.5 722.4,182.0 722.9,197.9 723.4,179.1 723.3,190.0 723.8,137.0 724.3,180.0 724.4,182.7 724.9,181.1 725.4,190.3 725.9,178.7 726.4,183.6 726.9,183.2 727.4,176.1 727.9,179.6 728.4,180.5 728.9,166.9 729.4,176.2 729.9,173.8 730.4,181.7 730.9,180.1 731.4,175.6 731.9,177.8 732.4,171.7 732.9,177.0 733.4,175.2 733.9,178.5 734.4,176.1 734.9,169.1 735.4,173.8 735.9,167.6 736.4,171.9 736.9,184.5 737.4,178.5 737.9,176.1 738.4,178.1 738.9,180.7 739.4,180.0 739.9,178.2 740.4,183.7 740.9,182.0 741.4,184.4 741.9,182.8 742.4,177.9 742.9,184.6 743.4,186.3 743.9,186.9 744.4,184.9 744.9,186.7 745.4,195.0 745.9,178.9 746.4,199.0 746.9,194.3 747.4,188.7 747.9,194.9 748.4,190.6 748.9,191.0 749.4,193.4 749.9,195.8 750.4,192.8 750.9,210.4 751.4,190.1 751.9,184.9 752.4,188.9 752.9,190.2 753.4,192.7 753.9,202.2 754.4,195.2 754.9,190.0 755.4,191.7 755.9,187.1 756.4,191.7 756.9,188.8 757.4,192.5 757.9,187.5 758.4,186.7 758.9,193.7 759.4,179.7 759.9,176.6 760.4,185.1 760.9,177.8 761.4,177.1 761.9,174.6 762.4,161.2 762.9,175.6 763.4,170.0 763.9,178.1 764.4,175.4 764.9,170.2 765.4,172.7 765.9,171.6 766.4,182.8 766.9,177.4 767.4,178.0 767.9,192.9 768.4,172.2 768.9,177.5 769.4,176.4 769.9,175.9 770.4,180.9 770.9,167.1 771.4,176.3 771.9,206.6 772.4,192.2 772.9,189.1 773.4,188.9 773.9,186.2 774.4,186.7 774.9,183.8 775.4,187.4 775.9,188.5 776.4,190.9 776.9,192.5 777.4,186.4 777.9,194.8 778.4,189.9 778.9,192.0 779.4,203.8 779.9,193.6 780.4,199.9 780.9,198.9 781.4,191.2 781.9,195.5 782.4,188.1 782.9,189.6 783.4,192.6 783.9,203.6 784.4,193.6 784.9,192.4 785.4,190.6 785.9,190.4 786.4,196.7 786.9,194.5 787.4,188.0 787.9,194.3 788.4,190.6 788.9,183.1 789.4,192.6 789.9,186.1 790.4,189.6 790.9,194.7 791.4,187.5 791.9,185.4 792.4,196.1 792.9,188.3 793.4,205.0 793.9,204.0 794.4,196.1 794.9,199.5 795.4,202.6 795.9,201.7 796.4,207.3 796.9,206.5 797.4,204.7 797.9,207.6 798.4,204.3 798.9,207.4 799.4,214.5 799.9,201.9 800.4,208.4 800.9,202.2 801.4,219.0 801.9,202.5 802.4,204.1 802.9,212.4 803.4,211.0 803.9,215.9 804.4,212.9 804.9,202.6 805.4,238.5 805.9,206.4 806.4,218.6 806.9,241.7 807.4,212.7 807.9,212.1 808.4,218.5 808.9,215.7 809.4,209.0 809.9,208.3 810.4,202.0 810.9,210.9 811.4,221.2 811.9,210.8 812.4,211.0 812.9,203.6 813.4,217.1 813.9,205.3 814.4,219.6 814.9,202.6 815.4,204.3 815.9,212.4 816.4,211.0 816.9,215.7 817.4,211.6 817.9,216.9 818.4,222.1 818.9,230.0 819.4,242.1 819.9,211.2 820.4,217.9 820.9,215.9 821.4,216.3 821.9,225.1 822.4,217.7 822.9,220.3 823.4,213.2 823.9,223.2 824.4,215.5 824.9,229.0 825.4,202.2 825.9,212.4 826.4,230.8 826.9,221.5 827.4,210.1 827.9,216.1 828.4,235.0 828.9,214.0 829.4,215.9 829.9,210.0 830.4,216.1 830.9,222.4 831.4,205.9 831.9,204.0 832.4,259.6 832.9,226.9 833.4,222.8 833.9,244.1 834.4,226.5 834.9,216.8 835.4,220.6 835.9,227.8 836.4,212.2 836.9,217.4 837.4,240.5 837.9,224.4 838.4,236.6 838.9,226.8 839.4,254.8 839.9,212.3 840.4,247.6 840.9,217.6 841.4,216.6 841.9,217.1 842.4,218.9 842.9,225.8 843.4,220.5 843.9,224.8 844.4,228.1 844.9,218.4 845.4,222.3 845.9,249.5 846.4,223.9 846.9,226.9 847.4,225.1 847.9,223.9 848.4,219.7 848.9,223.1 849.4,213.2 849.9,221.4 850.4,218.0 850.9,256.1 851.4,232.8 851.9,221.2 852.4,227.8 852.9,223.2 853.4,227.2 853.9,226.3 854.4,226.6 854.9,215.6 855.4,229.2 855.9,218.8 856.4,229.2 856.9,230.7 857.4,220.9 857.9,212.3 858.4,247.2 858.9,220.8 859.4,217.2 859.9,236.0 860.4,235.5 860.9,235.4 861.4,216.7 861.9,222.2 862.4,240.1 862.9,214.3 863.4,232.5 863.9,232.4 864.4,225.1 864.9,232.6 865.4,210.7 865.9,224.3 866.4,221.1 866.9,218.1 867.4,215.1 867.9,202.1 868.4,221.9 868.9,221.4 869.4,210.7 869.9,213.4 870.4,211.5 870.9,209.8 871.4,217.6 872.0,155.0 872.4,201.1 872.9,200.7 873.4,187.3 873.9,207.8 874.4,200.2 874.9,208.6 875.4,197.4 875.9,202.9 876.4,202.7 876.9,204.9 877.4,201.7 877.9,194.1 878.4,199.7 878.9,199.8 879.4,169.7 879.9,200.0 880.4,197.8 880.9,220.2 881.4,193.6 881.9,189.2 882.4,201.3 882.9,209.2 883.4,208.0 883.9,205.4 884.4,199.3 884.9,199.0 885.4,197.9 885.9,200.7 886.4,194.2 886.9,165.3 887.4,196.0 887.9,205.0 888.4,194.3 888.9,198.9 889.5,151.0 889.9,195.6 890.4,194.6 890.9,199.1 891.4,201.2 891.9,207.1 892.4,201.9 892.9,200.3 893.4,209.5 893.9,192.9 894.4,195.5 894.9,169.3 895.4,199.7 896.0,168.0 896.4,195.8 896.9,192.3 897.4,207.7 897.9,196.6 898.4,210.2 898.9,198.5 899.4,217.2 899.9,212.1 900.4,201.3 900.9,202.8 901.4,171.0 901.9,214.2 902.4,202.1 903.0,153.0 903.4,205.2 903.9,203.7 904.4,193.5 904.9,213.1 905.4,196.0 905.9,201.2 906.4,205.8 906.9,197.3 907.4,201.6 907.9,197.9 908.4,205.3 908.9,201.2 909.4,195.3 909.9,208.8 910.4,206.0 910.9,212.8 911.4,204.8 911.9,206.9 912.4,196.5 912.9,202.5 913.4,215.4 913.9,209.7 914.4,220.5 914.9,220.6 915.4,211.5 915.9,206.6 916.4,216.4 916.9,213.3 917.4,220.9 917.9,220.9 918.4,218.3 918.9,221.7 919.4,220.1 919.9,217.2 920.4,216.9 920.9,215.7 921.4,219.3 921.9,216.8 922.4,221.2 922.9,219.1 923.4,215.5 923.9,206.9 924.4,220.5 924.9,212.3 925.4,217.4 925.9,220.3 926.4,219.1 926.9,226.0 927.4,228.1 927.9,212.1 928.4,228.6 928.9,219.8 929.4,217.8 929.9,231.9 930.4,227.6 930.9,231.8 931.4,229.7 931.9,231.6 932.4,227.4 932.9,235.1 933.4,233.0 933.9,239.4 934.4,232.0 934.9,233.8 935.4,224.7 935.9,241.3 936.4,233.1 936.9,237.9 937.4,237.1 937.9,218.4 938.4,246.7 938.9,243.6 939.4,237.5 939.9,239.7 940.4,243.6 940.9,231.6 941.4,240.2 941.9,243.1 942.4,243.7 942.9,238.5 943.4,245.3 943.9,255.6 944.4,251.2 944.9,247.1 945.4,263.1 945.9,253.2 946.4,257.1 946.9,253.5 947.4,257.0 947.9,264.0 948.4,260.2 948.9,256.3 949.4,245.4 949.9,263.6 950.4,262.0 950.9,266.6 951.4,269.3 951.9,274.0 952.4,266.7 952.9,276.0 953.4,271.7 953.9,259.0 954.4,270.2 954.9,281.6" stroke="#12843c" stroke-width="1.1" fill="none" stroke-linejoin="miter"/>
<polyline points="29.0,135.8 30.0,135.8 31.0,135.8 32.0,135.8 33.0,135.8 34.0,135.8 35.0,135.8 36.0,135.8 37.0,135.8 38.0,135.8 39.0,135.8 40.0,135.8 41.0,135.8 42.0,135.8 43.0,135.8 44.0,135.8 45.0,135.8 46.0,135.8 47.0,135.8 48.0,135.8 49.0,135.8 50.0,135.8 51.0,135.8 52.0,135.8 53.0,135.8 54.0,135.8 55.0,135.8 56.0,135.8 57.0,135.8 58.0,135.8 59.0,135.8 60.0,135.8 61.0,135.8 62.0,135.8 63.0,135.8 64.0,135.8 65.0,135.8 66.0,135.8 67.0,135.8 68.0,135.8 69.0,135.8 70.0,135.8 71.0,135.8 72.0,135.8 73.0,135.8 74.0,135.8 75.0,135.8 76.0,135.8 77.0,135.8 78.0,135.8 79.0,135.8 80.0,135.8 81.0,135.8 82.0,135.8 83.0,135.8 84.0,135.8 85.0,135.8 86.0,135.8 87.0,135.8 88.0,135.8 89.0,135.8 90.0,135.8 91.0,135.8 92.0,135.8 93.0,135.8 94.0,135.8 95.0,135.8 96.0,135.8 97.0,135.8 98.0,135.8 99.0,135.8 100.0,135.8 101.0,135.8 102.0,135.8 103.0,135.8 104.0,135.8 105.0,135.8 106.0,135.8 107.0,135.8 108.0,135.8 109.0,135.8 110.0,135.8 111.0,135.8 112.0,135.8 113.0,135.8 114.0,135.8 115.0,135.8 116.0,135.8 117.0,135.8 118.0,135.8 119.0,135.8 120.0,135.8 121.0,135.8 122.0,135.8 123.0,135.8 124.0,135.8 125.0,135.8 126.0,135.8 127.0,135.8 128.0,135.8 129.0,135.8 130.0,135.8 131.0,135.8 132.0,135.8 133.0,135.8 134.0,135.8 135.0,135.8 136.0,135.8 137.0,135.8 138.0,135.8 139.0,135.8 140.0,135.8 141.0,135.8 142.0,135.8 143.0,135.8 144.0,135.8 145.0,135.8 146.0,135.8 147.0,135.8 148.0,135.8 149.0,135.8 150.0,135.8 151.0,135.8 152.0,135.8 153.0,135.8 154.0,135.8 155.0,135.8 156.0,135.8 157.0,135.8 158.0,135.8 159.0,135.8 160.0,135.8 161.0,135.8 162.0,135.8 163.0,135.8 164.0,135.8 165.0,135.8 166.0,135.8 167.0,135.8 168.0,135.8 169.0,135.8 170.0,135.8 171.0,135.8 172.0,135.8 173.0,135.8 174.0,135.8 175.0,135.8 176.0,135.8 177.0,135.8 178.0,135.8 179.0,135.8 180.0,135.8 181.0,135.8 182.0,135.8 183.0,135.8 184.0,135.8 185.0,135.8 186.0,135.8 187.0,135.8 188.0,135.8 189.0,135.8 190.0,135.8 191.0,135.8 192.0,135.8 193.0,135.8 194.0,135.8 195.0,135.8 196.0,135.8 197.0,135.8 198.0,135.8 199.0,135.8 200.0,135.8 201.0,135.8 202.0,135.8 203.0,135.8 204.0,135.8 205.0,135.8 206.0,135.8 207.0,135.8 208.0,135.8 209.0,135.8 210.0,135.8 211.0,135.8 212.0,135.8 213.0,135.8 214.0,135.8 215.0,135.8 216.0,135.8 217.0,135.8 218.0,135.8 219.0,135.8 220.0,135.8 221.0,135.8 222.0,135.8 223.0,135.8 224.0,135.8 225.0,135.8 226.0,135.8 227.0,135.8 228.0,135.8 229.0,135.8 230.0,135.8 231.0,135.8 232.0,135.8 233.0,135.8 234.0,135.8 235.0,135.8 236.0,135.8 237.0,135.8 238.0,135.8 239.0,135.8 240.0,135.8 241.0,135.8 242.0,135.8 243.0,135.8 244.0,135.8 245.0,135.8 246.0,135.8 247.0,135.8 248.0,135.8 249.0,135.8 250.0,135.8 251.0,135.8 252.0,135.8 253.0,135.8 254.0,135.8 255.0,135.8 256.0,135.8 257.0,135.8 258.0,135.8 259.0,135.8 260.0,135.8 261.0,135.8 262.0,135.8 263.0,135.8 264.0,135.8 265.0,135.8 266.0,135.8 267.0,135.8 268.0,135.8 269.0,135.8 270.0,135.8 271.0,135.8 272.0,135.8 273.0,135.8 274.0,135.8 275.0,135.8 276.0,135.8 277.0,135.8 278.0,135.8 279.0,135.8 280.0,135.8 281.0,135.8 282.0,135.8 283.0,135.8 284.0,135.8 285.0,135.8 286.0,135.8 287.0,135.8 288.0,135.8 289.0,135.8 290.0,135.8 291.0,135.8 292.0,135.8 293.0,135.8 294.0,135.8 295.0,135.8 296.0,135.8 297.0,135.8 298.0,135.8 299.0,135.8 300.0,135.8 301.0,135.8 302.0,135.8 303.0,135.8 304.0,135.8 305.0,135.8 306.0,135.8 307.0,135.8 308.0,135.8 309.0,135.8 310.0,135.8 311.0,135.8 312.0,135.8 313.0,135.8 314.0,135.8 315.0,135.8 316.0,135.8 317.0,135.8 318.0,135.8 319.0,135.8 320.0,135.8 321.0,135.8 322.0,135.8 323.0,135.8 324.0,135.8 325.0,135.8 326.0,135.8 327.0,135.8 328.0,135.8 329.0,135.8 330.0,135.8 331.0,135.8 332.0,135.8 333.0,135.8 334.0,135.8 335.0,135.8 336.0,135.8 337.0,135.8 338.0,135.8 339.0,135.8 340.0,135.8 341.0,135.8 342.0,135.8 343.0,135.8 344.0,135.8 345.0,135.8 346.0,135.8 347.0,135.8 348.0,135.8 349.0,135.8 350.0,135.8 351.0,135.8 352.0,135.8 353.0,135.8 354.0,135.8 355.0,135.8 356.0,135.8 357.0,135.8 358.0,135.8 359.0,135.8 360.0,135.8 361.0,135.8 362.0,135.8 363.0,135.8 364.0,135.8 365.0,135.8 366.0,135.8 367.0,135.8 368.0,135.8 369.0,135.8 370.0,135.8 371.0,135.8 372.0,135.8 373.0,135.8 374.0,135.8 375.0,135.8 376.0,135.8 377.0,135.8 378.0,135.8 379.0,135.8 380.0,135.8 381.0,135.8 382.0,135.8 383.0,135.8 384.0,135.8 385.0,135.8 386.0,135.8 387.0,135.8 388.0,135.8 389.0,135.8 390.0,135.8 391.0,135.8 392.0,135.8 393.0,135.8 394.0,135.8 395.0,135.8 396.0,135.8 397.0,135.8 398.0,135.8 399.0,135.8 400.0,135.8 401.0,135.8 402.0,135.8 403.0,135.8 404.0,135.8 405.0,135.8 406.0,135.8 407.0,135.8 408.0,135.8 409.0,135.8 410.0,135.8 411.0,135.8 412.0,135.8 413.0,135.8 414.0,135.8 415.0,135.8 416.0,135.8 417.0,135.8 418.0,135.8 419.0,135.8 420.0,135.8 421.0,135.8 422.0,135.8 423.0,135.8 424.0,135.8 425.0,135.8 426.0,135.8 427.0,135.8 428.0,135.8 429.0,135.8 430.0,135.8 431.0,135.8 432.0,135.8 433.0,135.8 434.0,135.8 435.0,135.8 436.0,135.8 437.0,135.8 438.0,135.8 439.0,135.8 440.0,135.8 441.0,135.8 442.0,135.8 443.0,135.8 444.0,135.8 445.0,135.8 446.0,135.8 447.0,135.8 448.0,135.8 449.0,135.8 450.0,135.8 451.0,135.8 452.0,135.8 453.0,135.8 454.0,135.8 455.0,135.8 456.0,135.8 457.0,135.8 458.0,135.8 459.0,135.8 460.0,135.8 461.0,135.8 462.0,135.8 463.0,135.8 464.0,135.8 465.0,135.8 466.0,135.8 467.0,135.8 468.0,135.8 469.0,135.8 470.0,135.8 471.0,135.8 472.0,135.8 473.0,135.8 474.0,135.8 475.0,135.8 476.0,135.8 477.0,135.8 478.0,135.8 479.0,135.8 480.0,135.8 481.0,135.8 482.0,135.8 483.0,135.8 484.0,135.8 485.0,135.8 486.0,135.8 487.0,135.8 488.0,135.8 489.0,135.8 490.0,135.8 491.0,135.8 492.0,135.8 493.0,135.8 494.0,135.8 495.0,135.8 496.0,135.8 497.0,135.8 498.0,135.8 499.0,135.8 500.0,135.8 501.0,135.8 502.0,135.8 503.0,135.8 504.0,135.8 505.0,135.8 506.0,135.8 507.0,135.8 508.0,135.8 509.0,135.8 510.0,135.8 511.0,135.8 512.0,135.8 513.0,135.8 514.0,135.8 515.0,135.8 516.0,135.8 517.0,135.8 518.0,135.8 519.0,135.8 520.0,135.8 521.0,135.8 522.0,135.8 523.0,135.8 524.0,135.8 525.0,135.8 526.0,135.8 527.0,135.8 528.0,135.8 529.0,135.8 530.0,135.8 531.0,135.8 532.0,135.8 533.0,135.8 534.0,135.8 535.0,135.8 536.0,135.8 537.0,135.8 538.0,135.8 539.0,135.8 540.0,135.8 541.0,135.8 542.0,135.8 543.0,135.8 544.0,135.8 545.0,135.8 546.0,135.8 547.0,135.8 548.0,135.8 549.0,135.8 550.0,135.8 551.0,135.8 552.0,135.8 553.0,135.8 554.0,135.8 555.0,135.8 556.0,135.8 557.0,135.8 558.0,135.8 559.0,135.8 560.0,135.8 561.0,135.8 562.0,135.8 563.0,135.8 564.0,135.8 565.0,135.8 566.0,135.8 567.0,135.8 568.0,135.8 569.0,135.8 570.0,135.8 571.0,135.8 572.0,135.8 573.0,135.8 574.0,135.8 575.0,135.8 576.0,135.8 577.0,135.8 578.0,135.8 579.0,135.8 580.0,135.8 581.0,135.8 582.0,135.8 583.0,135.8 584.0,135.8 585.0,135.8 586.0,135.8 587.0,135.8 588.0,135.8 589.0,135.8 590.0,135.8 591.0,135.8 592.0,135.8 593.0,135.8 594.0,135.8 595.0,135.8 596.0,135.8 597.0,135.8 598.0,135.8 599.0,135.8 600.0,135.8 601.0,135.8 602.0,135.8 603.0,135.8 604.0,135.8 605.0,135.8 606.0,135.8 607.0,135.8 608.0,135.8 609.0,135.8 610.0,135.8 611.0,135.8 612.0,135.8 613.0,135.8 614.0,135.8 615.0,135.8 616.0,135.8 617.0,135.8 618.0,135.8 619.0,135.8 620.0,135.8 621.0,135.8 622.0,135.8 623.0,135.8 624.0,135.8 625.0,135.8 626.0,135.8 627.0,135.8 628.0,135.8 629.0,135.8 630.0,135.8 631.0,135.8 632.0,135.8 633.0,135.8 634.0,135.8 635.0,135.8 636.0,135.8 637.0,135.8 638.0,135.8 639.0,135.8 640.0,135.8 641.0,135.8 642.0,135.8 643.0,135.8 644.0,135.8 645.0,135.8 646.0,135.8 647.0,135.8 648.0,135.8 649.0,135.8 650.0,135.8 651.0,135.8 652.0,135.8 653.0,135.8 654.0,135.8 655.0,135.8 656.0,135.8 657.0,135.8 658.0,135.8 659.0,135.8 660.0,135.8 661.0,135.8 662.0,135.8 663.0,135.8 664.0,135.8 665.0,135.8 666.0,135.8 667.0,135.8 668.0,135.8 669.0,135.8 670.0,135.8 671.0,135.8 672.0,135.8 673.0,135.8 674.0,135.8 675.0,135.8 676.0,135.8 677.0,135.8 678.0,135.8 679.0,135.8 680.0,135.8 681.0,135.8 682.0,135.8 683.0,135.8 684.0,135.8 685.0,135.8 686.0,135.8 687.0,135.8 688.0,135.8 689.0,135.8 690.0,135.8 691.0,135.8 692.0,135.8 693.0,135.8 694.0,135.8 695.0,135.8 696.0,135.8 697.0,135.8 698.0,135.8 699.0,135.8 700.0,135.8 701.0,135.8 702.0,135.8 703.0,135.8 704.0,135.8 705.0,135.8 706.0,135.8 707.0,135.8 708.0,135.8 709.0,135.8 710.0,135.8 711.0,135.8 712.0,135.8 713.0,135.8 714.0,135.8 715.0,135.8 716.0,135.8 717.0,135.8 718.0,135.8 719.0,135.8 720.0,135.8 721.0,135.8 722.0,135.8 723.0,135.8 724.0,135.8 725.0,135.8 726.0,135.8 727.0,135.8 728.0,135.8 729.0,135.8 730.0,135.8 731.0,135.8 732.0,135.8 733.0,135.8 734.0,135.8 735.0,135.8 736.0,135.8 737.0,135.8 738.0,135.8 739.0,135.8 740.0,135.8 741.0,135.8 742.0,135.8 743.0,135.8 744.0,135.8 745.0,135.8 746.0,135.8 747.0,135.8 748.0,135.8 749.0,135.8 750.0,135.8 751.0,135.8 752.0,135.8 753.0,135.8 754.0,135.8 755.0,135.8 756.0,135.8 757.0,135.8 758.0,135.8 759.0,135.8 760.0,135.8 761.0,135.8 762.0,135.8 763.0,135.8 764.0,135.8 765.0,135.8 766.0,135.8 767.0,135.8 768.0,135.8 769.0,135.8 770.0,135.8 771.0,135.8 772.0,135.8 773.0,135.8 774.0,135.8 775.0,135.8 776.0,135.8 777.0,135.8 778.0,135.8 779.0,135.8 780.0,135.8 781.0,135.8 782.0,135.8 783.0,135.8 784.0,135.8 785.0,135.8 786.0,135.8 787.0,135.8 788.0,135.8 789.0,135.8 790.0,135.8 791.0,135.8 792.0,135.8 793.0,135.8 794.0,135.8 795.0,135.8 796.0,135.8 797.0,135.8 798.0,135.8 799.0,135.8 800.0,135.8 801.0,135.8 802.0,135.8 803.0,135.8 804.0,135.8 805.0,135.8 806.0,135.8 807.0,135.8 808.0,135.8 809.0,135.8 810.0,135.8 811.0,135.8 812.0,135.8 813.0,135.8 814.0,135.8 815.0,135.9 816.0,135.9 817.0,135.9 818.0,135.9 819.0,135.9 820.0,135.9 821.0,135.9 822.0,135.9 823.0,135.9 824.0,135.9 825.0,135.9 826.0,136.0 827.0,136.0 828.0,136.0 829.0,136.0 830.0,136.0 831.0,136.0 832.0,136.1 833.0,136.1 834.0,136.1 835.0,136.2 836.0,136.2 837.0,136.2 838.0,136.3 839.0,136.3 840.0,136.4 841.0,136.4 842.0,136.5 843.0,136.6 844.0,136.6 845.0,136.7 846.0,136.8 847.0,136.9 848.0,137.0 849.0,137.1 850.0,137.3 851.0,137.4 852.0,137.6 853.0,137.7 854.0,137.9 855.0,138.1 856.0,138.3 857.0,138.6 858.0,138.8 859.0,139.1 860.0,139.4 861.0,139.7 862.0,140.1 863.0,140.5 864.0,140.9 865.0,141.3 866.0,141.8 867.0,142.3 868.0,142.9 869.0,143.4 870.0,144.1 871.0,144.7 872.0,145.4 873.0,146.2 874.0,146.9 875.0,147.8 876.0,148.6 877.0,149.5 878.0,150.5 879.0,151.5 880.0,152.5 881.0,153.6 882.0,154.7 883.0,155.9 884.0,157.1 885.0,158.3 886.0,159.6 887.0,160.9 888.0,162.3 889.0,163.6 890.0,165.0 891.0,166.5 892.0,167.9 893.0,169.4 894.0,170.9 895.0,172.5 896.0,174.0 897.0,175.6 898.0,177.2 899.0,178.8" stroke="#d8282c" stroke-width="1.4" fill="none"/>
<polyline points="588.2,137.4 588.5,137.5 588.7,137.5 589.0,137.6 589.2,137.6 589.5,137.7 589.7,137.7 590.0,137.8 590.2,137.8 590.5,137.9 590.7,138.0 591.0,138.0 591.2,138.1 591.5,138.2 591.7,138.2 592.0,138.3 592.2,138.4 592.5,138.5 592.7,138.5 593.0,138.6 593.2,138.7 593.5,138.8 593.7,138.9 594.0,139.0 594.2,139.2 594.5,139.3 594.7,139.4 595.0,139.6 595.2,139.7 595.5,139.8 595.7,140.0 596.0,140.2 596.2,140.4 596.5,140.5 596.7,140.7 597.0,141.0 597.2,141.2 597.5,141.4 597.7,141.7 598.0,142.0 598.2,142.3 598.5,142.6 598.7,142.9 599.0,143.3 599.2,143.7 599.5,144.1 599.7,144.5 600.0,145.0 600.2,145.5 600.5,146.1 600.7,146.7 601.0,147.4 601.2,148.1 601.5,148.9 601.7,149.7 602.0,150.7 602.2,151.7 602.5,152.8 602.7,154.1 603.0,155.5 603.2,157.0 603.5,158.6 603.7,160.5 604.0,162.6 604.2,164.9 604.9,230.0 607.2,332.0 609.4,230.0 610.2,164.9 610.5,162.6 610.7,160.5 611.0,158.6 611.2,157.0 611.5,155.5 611.7,154.1 612.0,152.8 612.2,151.7 612.5,150.7 612.7,149.7 613.0,148.9 613.2,148.1 613.5,147.4 613.7,146.7 614.0,146.1 614.2,145.5 614.5,145.0 614.7,144.5 615.0,144.1 615.2,143.7 615.5,143.3 615.7,142.9 616.0,142.6 616.2,142.3 616.5,142.0 616.7,141.7 617.0,141.4 617.2,141.2 617.5,141.0 617.7,140.7 618.0,140.5 618.2,140.4 618.5,140.2 618.7,140.0 619.0,139.8 619.2,139.7 619.5,139.6 619.7,139.4 620.0,139.3 620.2,139.2 620.5,139.0 620.7,138.9 621.0,138.8 621.2,138.7 621.5,138.6 621.7,138.5 622.0,138.5 622.2,138.4 622.5,138.3 622.7,138.2 623.0,138.2 623.2,138.1 623.5,138.0 623.7,138.0 624.0,137.9 624.2,137.8 624.5,137.8 624.7,137.7 625.0,137.7 625.2,137.6 625.5,137.6 625.7,137.5 626.0,137.5 626.2,137.4" stroke="#a0a0a0" stroke-width="1.3" fill="none" stroke-linejoin="miter"/>
<polyline points="704.8,136.7 705.1,136.7 705.3,136.7 705.6,136.8 705.8,136.8 706.1,136.8 706.3,136.8 706.6,136.9 706.8,136.9 707.1,136.9 707.3,137.0 707.6,137.0 707.8,137.0 708.1,137.1 708.3,137.1 708.6,137.2 708.8,137.2 709.1,137.3 709.3,137.3 709.6,137.4 709.8,137.4 710.1,137.5 710.3,137.5 710.6,137.6 710.8,137.7 711.1,137.7 711.3,137.8 711.6,137.9 711.8,138.0 712.1,138.1 712.3,138.1 712.6,138.2 712.8,138.3 713.1,138.5 713.3,138.6 713.6,138.7 713.8,138.8 714.1,139.0 714.3,139.1 714.6,139.3 714.8,139.5 715.1,139.7 715.3,139.9 715.6,140.1 715.8,140.4 716.1,140.6 716.3,140.9 716.6,141.2 716.8,141.6 717.1,141.9 717.3,142.4 717.6,142.8 717.8,143.3 718.1,143.8 718.3,144.4 718.6,145.1 718.8,145.8 719.1,146.7 719.3,147.6 719.6,148.6 719.8,149.8 720.1,151.1 720.3,152.6 720.6,154.3 720.8,156.2 721.1,158.5 722.8,264.0 723.8,293.0 726.2,264.0 726.6,158.5 726.8,156.2 727.1,154.3 727.3,152.6 727.6,151.1 727.8,149.8 728.1,148.6 728.3,147.6 728.6,146.7 728.8,145.8 729.1,145.1 729.3,144.4 729.6,143.8 729.8,143.3 730.1,142.8 730.3,142.4 730.6,141.9 730.8,141.6 731.1,141.2 731.3,140.9 731.6,140.6 731.8,140.4 732.1,140.1 732.3,139.9 732.6,139.7 732.8,139.5 733.1,139.3 733.3,139.1 733.6,139.0 733.8,138.8 734.1,138.7 734.3,138.6 734.6,138.5 734.8,138.3 735.1,138.2 735.3,138.1 735.6,138.1 735.8,138.0 736.1,137.9 736.3,137.8 736.6,137.7 736.8,137.7 737.1,137.6 737.3,137.5 737.6,137.5 737.8,137.4 738.1,137.4 738.3,137.3 738.6,137.3 738.8,137.2 739.1,137.2 739.3,137.1 739.6,137.1 739.8,137.0 740.1,137.0 740.3,137.0 740.6,136.9 740.8,136.9 741.1,136.9 741.3,136.8 741.6,136.8 741.8,136.8 742.1,136.8 742.3,136.7 742.6,136.7 742.8,136.7" stroke="#a0a0a0" stroke-width="1.3" fill="none" stroke-linejoin="miter"/>
<rect x="588" y="135.2" width="39.5" height="1.4" fill="#9a8a8a" opacity="0.75"/>
<rect x="711" y="135.2" width="27" height="1.4" fill="#9a8a8a" opacity="0.75"/>
<path d="M868.2 141.4 L875.7 148.3 L868.2 155.2 Z M883.3 141.4 L875.7 148.3 L883.3 155.2 Z" fill="#f2dc14"/>
<rect x="966.5" y="8.5" width="233.5" height="188.0" fill="none" stroke="#a0a0a0" stroke-width="1"/><rect x="967.5" y="9.5" width="233.5" height="188.0" fill="none" stroke="#ffffff" stroke-width="1"/><rect x="966.5" y="8.5" width="233.5" height="188.0" fill="none" stroke="#a0a0a0" stroke-width="1"/><rect x="976" y="6.5" width="38.5" height="4" fill="#f0f0f0"/>
<text transform="translate(978.56,13.70) scale(1.0756,1)" x="0" y="0" font-size="16" fill="#1a1a1a" >Play</text>
<rect x="1004" y="42" width="14.5" height="24.5" fill="#ffffff"/><rect x="1005.5" y="43.5" width="13" height="23" fill="#7a7a7a"/><rect x="1005.5" y="43.5" width="11.5" height="21.5" fill="#c6c6c6"/><path d="M1007.9 47 L1015 54 L1007.9 61 Z" fill="#5cbd24"/>
<rect x="1004" y="87" width="14.5" height="24.5" fill="#ffffff"/><rect x="1005.5" y="88.5" width="13" height="23" fill="#7a7a7a"/><rect x="1005.5" y="88.5" width="11.5" height="21.5" fill="#c6c6c6"/><rect x="1008.5" y="93.5" width="4" height="12" rx="1.5" fill="#f0f0f0" stroke="#000" stroke-width="1.6"/>
<rect x="1004" y="136" width="14.5" height="24.5" fill="#ffffff"/><rect x="1005.5" y="137.5" width="13" height="23" fill="#7a7a7a"/><rect x="1005.5" y="137.5" width="11.5" height="21.5" fill="#c6c6c6"/><path d="M1007.9 141 L1015 148 L1007.9 155 Z" fill="#b03ca8"/>
<rect x="966.5" y="213.5" width="117.5" height="106.0" fill="none" stroke="#a0a0a0" stroke-width="1"/><rect x="967.5" y="214.5" width="117.5" height="106.0" fill="none" stroke="#ffffff" stroke-width="1"/><rect x="966.5" y="213.5" width="117.5" height="106.0" fill="none" stroke="#a0a0a0" stroke-width="1"/><rect x="976" y="211.5" width="82" height="4" fill="#f0f0f0"/>
<text transform="translate(978.22,219.70) scale(1.0263,1)" x="0" y="0" font-size="16" fill="#1a1a1a" >Frequency</text>
<rect x="1089" y="213.5" width="111" height="106.0" fill="none" stroke="#a0a0a0" stroke-width="1"/><rect x="1090" y="214.5" width="111" height="106.0" fill="none" stroke="#ffffff" stroke-width="1"/><rect x="1089" y="213.5" width="111" height="106.0" fill="none" stroke="#a0a0a0" stroke-width="1"/><rect x="1098" y="211.5" width="77" height="4" fill="#f0f0f0"/>
<text transform="translate(1101.00,219.40) scale(1.0071,1)" x="0" y="0" font-size="16" fill="#1a1a1a" >Amplitude</text>
<circle cx="984.7" cy="249.7" r="8.2" fill="#ffffff"/><path d="M979.40 255.00 A7.5 7.5 0 0 1 990.00 244.40" stroke="#8a8a8a" stroke-width="1.6" fill="none"/><path d="M980.40 254.00 A6.1 6.1 0 0 1 989.00 245.40" stroke="#3a3a3a" stroke-width="1.2" fill="none"/><circle cx="984.9000000000001" cy="249.7" r="3.9" fill="#000"/>
<text transform="translate(999.78,255.60) scale(1.0596,1)" x="0" y="0" font-size="16" fill="#1a1a1a" >Log.</text>
<circle cx="984.7" cy="284.2" r="8.2" fill="#ffffff"/><path d="M979.40 289.50 A7.5 7.5 0 0 1 990.00 278.90" stroke="#8a8a8a" stroke-width="1.6" fill="none"/><path d="M980.40 288.50 A6.1 6.1 0 0 1 989.00 279.90" stroke="#3a3a3a" stroke-width="1.2" fill="none"/>
<text transform="translate(999.87,289.50) scale(0.9849,1)" x="0" y="0" font-size="16" fill="#1a1a1a" >Lin.</text>
<circle cx="1109.5" cy="252.7" r="8.2" fill="#ffffff"/><path d="M1104.20 258.00 A7.5 7.5 0 0 1 1114.80 247.40" stroke="#8a8a8a" stroke-width="1.6" fill="none"/><path d="M1105.20 257.00 A6.1 6.1 0 0 1 1113.80 248.40" stroke="#3a3a3a" stroke-width="1.2" fill="none"/><circle cx="1109.7" cy="252.7" r="3.9" fill="#000"/>
<text transform="translate(1124.58,257.90) scale(1.0526,1)" x="0" y="0" font-size="16" fill="#1a1a1a" >Log.</text>
<circle cx="1109.5" cy="284.8" r="8.2" fill="#ffffff"/><path d="M1104.20 290.10 A7.5 7.5 0 0 1 1114.80 279.50" stroke="#8a8a8a" stroke-width="1.6" fill="none"/><path d="M1105.20 289.10 A6.1 6.1 0 0 1 1113.80 280.50" stroke="#3a3a3a" stroke-width="1.2" fill="none"/>
<text transform="translate(1124.70,289.50) scale(0.9634,1)" x="0" y="0" font-size="16" fill="#1a1a1a" >Lin.</text>
<rect x="966.5" y="332.5" width="233.5" height="86.0" fill="none" stroke="#a0a0a0" stroke-width="1"/><rect x="967.5" y="333.5" width="233.5" height="86.0" fill="none" stroke="#ffffff" stroke-width="1"/><rect x="966.5" y="332.5" width="233.5" height="86.0" fill="none" stroke="#a0a0a0" stroke-width="1"/>
<text transform="translate(979.01,357.80) scale(1.0334,1)" x="0" y="0" font-size="16" fill="#1a1a1a" >Resolution</text>
<rect x="975.5" y="369.8" width="139" height="27" fill="#ffffff"/>
<path d="M976.3 396 V370.6 H1113.7" stroke="#6e6e6e" stroke-width="1.8" fill="none"/>
<path d="M976.3 396 H1113.7 V370.6" stroke="#9a9a9a" stroke-width="1.6" fill="none"/>
<rect x="1089.5" y="372" width="23" height="22.5" fill="#e6e6e6"/>
<rect x="1089.5" y="372" width="1.2" height="22.5" fill="#ffffff"/>
<rect x="1089.5" y="393" width="23.5" height="2.2" fill="#7a7a7a"/>
<path d="M1095.3 381.6 L1106.8 381.6 L1101 387.4 Z" fill="#000"/>
<text transform="translate(983.19,389.80) scale(0.9646,1)" x="0" y="0" font-size="16" fill="#1a1a1a" >11.72 Hz</text>
<rect x="0" y="437.5" width="1180" height="1.5" fill="#707070"/>
<rect x="0" y="439.6" width="1180" height="1.4" fill="#ffffff"/>
<rect x="0" y="441" width="1180" height="20.8" fill="#98b3d1"/>
<rect x="0" y="460.2" width="1180" height="1.2" fill="#a6c2e0"/>
<rect x="682.4" y="464.7" width="66.6" height="38.0" fill="#7f7f7f"/>
<rect x="613.2" y="628.4" width="66.5" height="37.5" fill="#7f7f7f"/>
<rect x="682.4" y="587.8" width="66.6" height="37.6" fill="#7f7f7f"/>
<rect x="682.4" y="546.5" width="66.6" height="38.3" fill="#7f7f7f"/>
<rect x="281.7" y="505.7" width="137.3" height="37.8" fill="#7f7f7f"/>
<rect x="613.2" y="587.8" width="66.5" height="37.6" fill="#7f7f7f"/>
<rect x="281.7" y="464.7" width="137.3" height="38.0" fill="#7f7f7f"/>
<rect x="613.2" y="546.5" width="66.5" height="38.3" fill="#7f7f7f"/>
<rect x="682.4" y="505.7" width="66.6" height="37.8" fill="#7f7f7f"/>
<rect x="682.4" y="628.4" width="66.6" height="37.5" fill="#7f7f7f"/>
<rect x="0" y="463.6" width="1180" height="1.3" fill="#ffffff"/>
<rect x="0" y="504.6" width="1180" height="1.3" fill="#ffffff"/>
<rect x="0" y="545.4" width="1180" height="1.3" fill="#ffffff"/>
<rect x="0" y="586.7" width="1180" height="1.3" fill="#ffffff"/>
<rect x="0" y="627.3" width="1180" height="1.3" fill="#ffffff"/>
<rect x="55.5" y="440" width="1.2" height="226.5" fill="#ffffff"/>
<rect x="95.0" y="440" width="1.2" height="226.5" fill="#ffffff"/>
<rect x="135.0" y="440" width="1.2" height="226.5" fill="#ffffff"/>
<rect x="160.0" y="440" width="1.2" height="226.5" fill="#ffffff"/>
<rect x="280.5" y="440" width="1.2" height="226.5" fill="#ffffff"/>
<rect x="420.5" y="440" width="1.2" height="226.5" fill="#ffffff"/>
<rect x="501.0" y="440" width="1.2" height="226.5" fill="#ffffff"/>
<rect x="612.0" y="440" width="1.2" height="226.5" fill="#ffffff"/>
<rect x="681.2" y="440" width="1.2" height="226.5" fill="#ffffff"/>
<rect x="750.5" y="440" width="1.2" height="226.5" fill="#ffffff"/>
<rect x="0.0" y="441" width="54.5" height="0.8" fill="#a9c3de"/>
<rect x="55.7" y="441" width="38.3" height="0.8" fill="#a9c3de"/>
<rect x="95.2" y="441" width="38.8" height="0.8" fill="#a9c3de"/>
<rect x="135.2" y="441" width="23.8" height="0.8" fill="#a9c3de"/>
<rect x="160.2" y="441" width="119.3" height="0.8" fill="#a9c3de"/>
<rect x="280.7" y="441" width="138.8" height="0.8" fill="#a9c3de"/>
<rect x="420.7" y="441" width="79.3" height="0.8" fill="#a9c3de"/>
<rect x="501.2" y="441" width="109.8" height="0.8" fill="#a9c3de"/>
<rect x="612.2" y="441" width="68.0" height="0.8" fill="#a9c3de"/>
<rect x="681.4" y="441" width="68.1" height="0.8" fill="#a9c3de"/>
<rect x="750.7" y="441" width="429.3" height="0.8" fill="#a9c3de"/>
<rect x="0" y="461.5" width="1180" height="1.6" fill="#0a0a0a"/>
<rect x="0" y="502.5" width="1180" height="1.6" fill="#0a0a0a"/>
<rect x="0" y="543.3" width="1180" height="1.6" fill="#0a0a0a"/>
<rect x="0" y="584.6" width="1180" height="1.6" fill="#0a0a0a"/>
<rect x="0" y="625.2" width="1180" height="1.6" fill="#0a0a0a"/>
<rect x="0" y="665.7" width="1180" height="1.6" fill="#0a0a0a"/>
<rect x="53.9" y="438.5" width="1.5" height="228.7" fill="#0a0a0a"/>
<rect x="93.4" y="438.5" width="1.5" height="228.7" fill="#0a0a0a"/>
<rect x="133.4" y="438.5" width="1.5" height="228.7" fill="#0a0a0a"/>
<rect x="158.4" y="438.5" width="1.5" height="228.7" fill="#0a0a0a"/>
<rect x="278.9" y="438.5" width="1.5" height="228.7" fill="#0a0a0a"/>
<rect x="418.9" y="438.5" width="1.5" height="228.7" fill="#0a0a0a"/>
<rect x="499.4" y="438.5" width="1.5" height="228.7" fill="#0a0a0a"/>
<rect x="610.4" y="438.5" width="1.5" height="228.7" fill="#0a0a0a"/>
<rect x="679.6" y="438.5" width="1.5" height="228.7" fill="#0a0a0a"/>
<rect x="748.9" y="438.5" width="1.5" height="228.7" fill="#0a0a0a"/>
<rect x="0" y="667.5" width="1180" height="1.2" fill="#ffffff"/>
<text transform="translate(-0.71,456.80) scale(0.9511,1)" x="0" y="0" font-size="16" fill="#0a0a0a" >Cursor</text>
<text transform="translate(58.07,456.80) scale(1.0621,1)" x="0" y="0" font-size="16" fill="#0a0a0a" >L</text>
<text transform="translate(97.58,456.80) scale(1.1368,1)" x="0" y="0" font-size="16" fill="#0a0a0a" >R</text>
<text transform="translate(162.38,456.80) scale(0.9743,1)" x="0" y="0" font-size="16" fill="#0a0a0a" >Filter Function</text>
<text transform="translate(282.46,456.80) scale(0.9919,1)" x="0" y="0" font-size="16" fill="#0a0a0a" >Filter type</text>
<text transform="translate(423.04,456.80) scale(1.0100,1)" x="0" y="0" font-size="16" fill="#0a0a0a" >Order</text>
<text transform="translate(503.55,456.80) scale(1.0021,1)" x="0" y="0" font-size="16" fill="#0a0a0a" >FilterFreq.</text>
<text transform="translate(613.96,456.80) scale(0.9818,1)" x="0" y="0" font-size="16" fill="#0a0a0a" >Q</text>
<text transform="translate(683.75,456.80) scale(1.0000,1)" x="0" y="0" font-size="16" fill="#0a0a0a" >Gain</text>
<text transform="translate(753.36,456.80) scale(0.9883,1)" x="0" y="0" font-size="16" fill="#0a0a0a" >Comment</text>
<circle cx="23.9" cy="482.59999999999997" r="9.4" fill="#ffffff"/><path d="M30.56 477.01 A8.700000000000001 8.700000000000001 0 1 1 16.77 487.59" stroke="#cdcdcd" stroke-width="1.4" fill="none"/><path d="M17.20 486.79 A7.9 7.9 0 0 1 29.77 477.31" stroke="#202020" stroke-width="2.8" fill="none"/>
<rect x="67.0" y="474.5" width="15.5" height="17" fill="#ffffff"/><rect x="80.2" y="477.2" width="1" height="12.3" fill="#dcdcdc"/><rect x="69.0" y="489.2" width="12.2" height="1" fill="#dcdcdc"/><path d="M68.2 490.5 V476.6 H81.8" stroke="#151515" stroke-width="2.1" fill="none"/><path d="M71.0 482.2 L73.6 486.8 L79.0 479.4" stroke="#000" stroke-width="2.9" fill="none" stroke-linejoin="miter"/>
<rect x="106.5" y="474.5" width="15.5" height="17" fill="#ffffff"/><rect x="119.7" y="477.2" width="1" height="12.3" fill="#dcdcdc"/><rect x="108.5" y="489.2" width="12.2" height="1" fill="#dcdcdc"/><path d="M107.7 490.5 V476.6 H121.3" stroke="#151515" stroke-width="2.1" fill="none"/><path d="M110.5 482.2 L113.1 486.8 L118.5 479.4" stroke="#000" stroke-width="2.9" fill="none" stroke-linejoin="miter"/>
<rect x="140.5" y="472.0" width="13" height="23" fill="#c4c4c4" stroke="#0a0a0a" stroke-width="1.6"/><rect x="141.8" y="473.2" width="1.4" height="20.5" fill="#ffffff"/><path d="M143.5 477.2 L151.5 483.5 L143.5 489.8 Z" fill="#b040a8"/>
<text transform="translate(162.39,488.90) scale(0.9695,1)" x="0" y="0" font-size="17" fill="#0a0a0a" >Band-stop</text>
<text transform="translate(282.66,488.90) scale(0.9884,1)" x="0" y="0" font-size="17" fill="#0a0a0a" >None</text>
<text transform="translate(423.15,488.90) scale(0.8692,1)" x="0" y="0" font-size="17" fill="#0a0a0a" >6th.</text>
<text transform="translate(552.88,488.90) scale(0.8961,1)" x="0" y="0" font-size="17" fill="#0a0a0a" >1174.00</text>
<text transform="translate(639.00,488.90) scale(0.8765,1)" x="0" y="0" font-size="17" fill="#0a0a0a" >10.92</text>
<text transform="translate(716.94,488.90) scale(0.8452,1)" x="0" y="0" font-size="17" fill="#0a0a0a" >1.01</text>
<text transform="translate(753.40,488.90) scale(0.9306,1)" x="0" y="0" font-size="17" fill="#0a0a0a" >Comment</text>
<rect x="261.0" y="473.2" width="18" height="20" fill="#ffffff"/><rect x="263.0" y="475.0" width="16" height="16.6" fill="#c0c0c0"/><rect x="261.0" y="492.2" width="18" height="1.6" fill="#0a0a0a"/><path d="M265.6 480.2 L274.4 480.2 L270.0 485.7 Z" fill="#000"/>
<rect x="401.0" y="473.2" width="18" height="20" fill="#ffffff"/><rect x="403.0" y="475.0" width="16" height="16.6" fill="#c0c0c0"/><rect x="401.0" y="492.2" width="18" height="1.6" fill="#0a0a0a"/><path d="M405.6 480.2 L414.4 480.2 L410.0 485.7 Z" fill="#000"/>
<rect x="481.5" y="473.2" width="18" height="20" fill="#ffffff"/><rect x="483.5" y="475.0" width="16" height="16.6" fill="#c0c0c0"/><rect x="481.5" y="492.2" width="18" height="1.6" fill="#0a0a0a"/><path d="M486.1 480.2 L494.9 480.2 L490.5 485.7 Z" fill="#000"/>
<circle cx="23.9" cy="523.6" r="9.4" fill="#ffffff"/><path d="M30.56 518.01 A8.700000000000001 8.700000000000001 0 1 1 16.77 528.59" stroke="#cdcdcd" stroke-width="1.4" fill="none"/><path d="M17.20 527.79 A7.9 7.9 0 0 1 29.77 518.31" stroke="#202020" stroke-width="2.8" fill="none"/>
<rect x="67.0" y="515.5" width="15.5" height="17" fill="#ffffff"/><rect x="80.2" y="518.2" width="1" height="12.3" fill="#dcdcdc"/><rect x="69.0" y="530.2" width="12.2" height="1" fill="#dcdcdc"/><path d="M68.2 531.5 V517.6 H81.8" stroke="#151515" stroke-width="2.1" fill="none"/><path d="M71.0 523.2 L73.6 527.8 L79.0 520.4" stroke="#000" stroke-width="2.9" fill="none" stroke-linejoin="miter"/>
<rect x="106.5" y="515.5" width="15.5" height="17" fill="#ffffff"/><rect x="119.7" y="518.2" width="1" height="12.3" fill="#dcdcdc"/><rect x="108.5" y="530.2" width="12.2" height="1" fill="#dcdcdc"/><path d="M107.7 531.5 V517.6 H121.3" stroke="#151515" stroke-width="2.1" fill="none"/><path d="M110.5 523.2 L113.1 527.8 L118.5 520.4" stroke="#000" stroke-width="2.9" fill="none" stroke-linejoin="miter"/>
<rect x="140.5" y="513.0" width="13" height="23" fill="#c4c4c4" stroke="#0a0a0a" stroke-width="1.6"/><rect x="141.8" y="514.2" width="1.4" height="20.5" fill="#ffffff"/><path d="M143.5 518.2 L151.5 524.5 L143.5 530.8 Z" fill="#b040a8"/>
<text transform="translate(162.39,529.90) scale(0.9695,1)" x="0" y="0" font-size="17" fill="#0a0a0a" >Band-stop</text>
<text transform="translate(282.66,529.90) scale(0.9884,1)" x="0" y="0" font-size="17" fill="#0a0a0a" >None</text>
<text transform="translate(423.15,529.90) scale(0.8692,1)" x="0" y="0" font-size="17" fill="#0a0a0a" >6th.</text>
<text transform="translate(552.64,529.90) scale(0.8817,1)" x="0" y="0" font-size="17" fill="#0a0a0a" >2970.00</text>
<text transform="translate(639.20,529.90) scale(0.8761,1)" x="0" y="0" font-size="17" fill="#0a0a0a" >15.00</text>
<text transform="translate(717.66,529.90) scale(0.8320,1)" x="0" y="0" font-size="17" fill="#0a0a0a" >1.00</text>
<text transform="translate(753.40,529.90) scale(0.9306,1)" x="0" y="0" font-size="17" fill="#0a0a0a" >Comment</text>
<rect x="261.0" y="514.2" width="18" height="20" fill="#ffffff"/><rect x="263.0" y="516.0" width="16" height="16.6" fill="#c0c0c0"/><rect x="261.0" y="533.2" width="18" height="1.6" fill="#0a0a0a"/><path d="M265.6 521.2 L274.4 521.2 L270.0 526.7 Z" fill="#000"/>
<rect x="401.0" y="514.2" width="18" height="20" fill="#ffffff"/><rect x="403.0" y="516.0" width="16" height="16.6" fill="#c0c0c0"/><rect x="401.0" y="533.2" width="18" height="1.6" fill="#0a0a0a"/><path d="M405.6 521.2 L414.4 521.2 L410.0 526.7 Z" fill="#000"/>
<rect x="481.5" y="514.2" width="18" height="20" fill="#ffffff"/><rect x="483.5" y="516.0" width="16" height="16.6" fill="#c0c0c0"/><rect x="481.5" y="533.2" width="18" height="1.6" fill="#0a0a0a"/><path d="M486.1 521.2 L494.9 521.2 L490.5 526.7 Z" fill="#000"/>
<circle cx="23.9" cy="564.4" r="9.4" fill="#ffffff"/><path d="M30.56 558.81 A8.700000000000001 8.700000000000001 0 1 1 16.77 569.39" stroke="#cdcdcd" stroke-width="1.4" fill="none"/><path d="M17.20 568.59 A7.9 7.9 0 0 1 29.77 559.11" stroke="#202020" stroke-width="2.8" fill="none"/><circle cx="23.9" cy="564.4" r="3.4" fill="#000"/>
<rect x="67.0" y="556.3" width="15.5" height="17" fill="#ffffff"/><rect x="80.2" y="559.0" width="1" height="12.3" fill="#dcdcdc"/><rect x="69.0" y="571.0" width="12.2" height="1" fill="#dcdcdc"/><path d="M68.2 572.3 V558.4 H81.8" stroke="#151515" stroke-width="2.1" fill="none"/><path d="M71.0 564.0 L73.6 568.6 L79.0 561.2" stroke="#000" stroke-width="2.9" fill="none" stroke-linejoin="miter"/>
<rect x="106.5" y="556.3" width="15.5" height="17" fill="#ffffff"/><rect x="119.7" y="559.0" width="1" height="12.3" fill="#dcdcdc"/><rect x="108.5" y="571.0" width="12.2" height="1" fill="#dcdcdc"/><path d="M107.7 572.3 V558.4 H121.3" stroke="#151515" stroke-width="2.1" fill="none"/><path d="M110.5 564.0 L113.1 568.6 L118.5 561.2" stroke="#000" stroke-width="2.9" fill="none" stroke-linejoin="miter"/>
<rect x="140.5" y="553.8" width="13" height="23" fill="#c4c4c4" stroke="#0a0a0a" stroke-width="1.6"/><rect x="141.8" y="555.0" width="1.4" height="20.5" fill="#ffffff"/><path d="M143.5 559.0 L151.5 565.3 L143.5 571.6 Z" fill="#b040a8"/>
<text transform="translate(161.89,570.70) scale(0.9690,1)" x="0" y="0" font-size="17" fill="#0a0a0a" >Low-pass</text>
<text transform="translate(282.37,570.70) scale(0.9062,1)" x="0" y="0" font-size="17" fill="#0a0a0a" >Butterworth</text>
<text transform="translate(423.15,570.70) scale(0.8692,1)" x="0" y="0" font-size="17" fill="#0a0a0a" >6th.</text>
<text transform="translate(544.30,570.70) scale(0.8812,1)" x="0" y="0" font-size="17" fill="#0a0a0a" >10000.00</text>
<text transform="translate(647.74,570.70) scale(0.8756,1)" x="0" y="0" font-size="17" fill="#0a0a0a" >0.00</text>
<text transform="translate(717.66,570.70) scale(0.8320,1)" x="0" y="0" font-size="17" fill="#0a0a0a" >1.00</text>
<text transform="translate(753.40,570.70) scale(0.9306,1)" x="0" y="0" font-size="17" fill="#0a0a0a" >Comment</text>
<rect x="261.0" y="555.0" width="18" height="20" fill="#ffffff"/><rect x="263.0" y="556.8" width="16" height="16.6" fill="#c0c0c0"/><rect x="261.0" y="574.0" width="18" height="1.6" fill="#0a0a0a"/><path d="M265.6 562.0 L274.4 562.0 L270.0 567.5 Z" fill="#000"/>
<rect x="401.0" y="555.0" width="18" height="20" fill="#ffffff"/><rect x="403.0" y="556.8" width="16" height="16.6" fill="#c0c0c0"/><rect x="401.0" y="574.0" width="18" height="1.6" fill="#0a0a0a"/><path d="M405.6 562.0 L414.4 562.0 L410.0 567.5 Z" fill="#000"/>
<rect x="481.5" y="555.0" width="18" height="20" fill="#ffffff"/><rect x="483.5" y="556.8" width="16" height="16.6" fill="#c0c0c0"/><rect x="481.5" y="574.0" width="18" height="1.6" fill="#0a0a0a"/><path d="M486.1 562.0 L494.9 562.0 L490.5 567.5 Z" fill="#000"/>
<circle cx="23.9" cy="605.6999999999999" r="9.4" fill="#ffffff"/><path d="M30.56 600.11 A8.700000000000001 8.700000000000001 0 1 1 16.77 610.69" stroke="#cdcdcd" stroke-width="1.4" fill="none"/><path d="M17.20 609.89 A7.9 7.9 0 0 1 29.77 600.41" stroke="#202020" stroke-width="2.8" fill="none"/>
<rect x="67.0" y="597.6" width="15.5" height="17" fill="#ffffff"/><rect x="80.2" y="600.3" width="1" height="12.3" fill="#dcdcdc"/><rect x="69.0" y="612.3" width="12.2" height="1" fill="#dcdcdc"/><path d="M68.2 613.6 V599.7 H81.8" stroke="#151515" stroke-width="2.1" fill="none"/>
<rect x="106.5" y="597.6" width="15.5" height="17" fill="#ffffff"/><rect x="119.7" y="600.3" width="1" height="12.3" fill="#dcdcdc"/><rect x="108.5" y="612.3" width="12.2" height="1" fill="#dcdcdc"/><path d="M107.7 613.6 V599.7 H121.3" stroke="#151515" stroke-width="2.1" fill="none"/>
<rect x="140.5" y="595.1" width="13" height="23" fill="#c4c4c4" stroke="#0a0a0a" stroke-width="1.6"/><rect x="141.8" y="596.3" width="1.4" height="20.5" fill="#ffffff"/><path d="M143.5 600.3 L151.5 606.6 L143.5 612.9 Z" fill="#b040a8"/>
<text transform="translate(161.89,612.00) scale(0.9690,1)" x="0" y="0" font-size="17" fill="#0a0a0a" >Low-pass</text>
<text transform="translate(282.37,612.00) scale(0.9062,1)" x="0" y="0" font-size="17" fill="#0a0a0a" >Butterworth</text>
<text transform="translate(423.15,612.00) scale(0.8692,1)" x="0" y="0" font-size="17" fill="#0a0a0a" >6th.</text>
<text transform="translate(552.60,612.00) scale(0.8824,1)" x="0" y="0" font-size="17" fill="#0a0a0a" >1000.00</text>
<text transform="translate(647.74,612.00) scale(0.8756,1)" x="0" y="0" font-size="17" fill="#0a0a0a" >0.00</text>
<text transform="translate(717.66,612.00) scale(0.8320,1)" x="0" y="0" font-size="17" fill="#0a0a0a" >1.00</text>
<text transform="translate(753.40,612.00) scale(0.9306,1)" x="0" y="0" font-size="17" fill="#0a0a0a" >Comment</text>
<rect x="261.0" y="596.3" width="18" height="20" fill="#ffffff"/><rect x="263.0" y="598.1" width="16" height="16.6" fill="#c0c0c0"/><rect x="261.0" y="615.3" width="18" height="1.6" fill="#0a0a0a"/><path d="M265.6 603.3 L274.4 603.3 L270.0 608.8 Z" fill="#000"/>
<rect x="401.0" y="596.3" width="18" height="20" fill="#ffffff"/><rect x="403.0" y="598.1" width="16" height="16.6" fill="#c0c0c0"/><rect x="401.0" y="615.3" width="18" height="1.6" fill="#0a0a0a"/><path d="M405.6 603.3 L414.4 603.3 L410.0 608.8 Z" fill="#000"/>
<rect x="481.5" y="596.3" width="18" height="20" fill="#ffffff"/><rect x="483.5" y="598.1" width="16" height="16.6" fill="#c0c0c0"/><rect x="481.5" y="615.3" width="18" height="1.6" fill="#0a0a0a"/><path d="M486.1 603.3 L494.9 603.3 L490.5 608.8 Z" fill="#000"/>
<circle cx="23.9" cy="646.3" r="9.4" fill="#ffffff"/><path d="M30.56 640.71 A8.700000000000001 8.700000000000001 0 1 1 16.77 651.29" stroke="#cdcdcd" stroke-width="1.4" fill="none"/><path d="M17.20 650.49 A7.9 7.9 0 0 1 29.77 641.01" stroke="#202020" stroke-width="2.8" fill="none"/>
<rect x="67.0" y="638.2" width="15.5" height="17" fill="#ffffff"/><rect x="80.2" y="640.9" width="1" height="12.3" fill="#dcdcdc"/><rect x="69.0" y="652.9" width="12.2" height="1" fill="#dcdcdc"/><path d="M68.2 654.2 V640.3 H81.8" stroke="#151515" stroke-width="2.1" fill="none"/>
<rect x="106.5" y="638.2" width="15.5" height="17" fill="#ffffff"/><rect x="119.7" y="640.9" width="1" height="12.3" fill="#dcdcdc"/><rect x="108.5" y="652.9" width="12.2" height="1" fill="#dcdcdc"/><path d="M107.7 654.2 V640.3 H121.3" stroke="#151515" stroke-width="2.1" fill="none"/>
<rect x="140.5" y="635.7" width="13" height="23" fill="#c4c4c4" stroke="#0a0a0a" stroke-width="1.6"/><rect x="141.8" y="636.9" width="1.4" height="20.5" fill="#ffffff"/><path d="M143.5 640.9 L151.5 647.2 L143.5 653.5 Z" fill="#b040a8"/>
<text transform="translate(161.89,652.60) scale(0.9690,1)" x="0" y="0" font-size="17" fill="#0a0a0a" >Low-pass</text>
<text transform="translate(282.37,652.60) scale(0.9062,1)" x="0" y="0" font-size="17" fill="#0a0a0a" >Butterworth</text>
<text transform="translate(423.15,652.60) scale(0.8692,1)" x="0" y="0" font-size="17" fill="#0a0a0a" >6th.</text>
<text transform="translate(552.60,652.60) scale(0.8824,1)" x="0" y="0" font-size="17" fill="#0a0a0a" >1000.00</text>
<text transform="translate(647.74,652.60) scale(0.8756,1)" x="0" y="0" font-size="17" fill="#0a0a0a" >0.00</text>
<text transform="translate(717.66,652.60) scale(0.8320,1)" x="0" y="0" font-size="17" fill="#0a0a0a" >1.00</text>
<text transform="translate(753.40,652.60) scale(0.9306,1)" x="0" y="0" font-size="17" fill="#0a0a0a" >Comment</text>
<rect x="261.0" y="636.9" width="18" height="20" fill="#ffffff"/><rect x="263.0" y="638.7" width="16" height="16.6" fill="#c0c0c0"/><rect x="261.0" y="655.9" width="18" height="1.6" fill="#0a0a0a"/><path d="M265.6 643.9 L274.4 643.9 L270.0 649.4 Z" fill="#000"/>
<rect x="401.0" y="636.9" width="18" height="20" fill="#ffffff"/><rect x="403.0" y="638.7" width="16" height="16.6" fill="#c0c0c0"/><rect x="401.0" y="655.9" width="18" height="1.6" fill="#0a0a0a"/><path d="M405.6 643.9 L414.4 643.9 L410.0 649.4 Z" fill="#000"/>
<rect x="481.5" y="636.9" width="18" height="20" fill="#ffffff"/><rect x="483.5" y="638.7" width="16" height="16.6" fill="#c0c0c0"/><rect x="481.5" y="655.9" width="18" height="1.6" fill="#0a0a0a"/><path d="M486.1 643.9 L494.9 643.9 L490.5 649.4 Z" fill="#000"/>
</svg></body></html>
